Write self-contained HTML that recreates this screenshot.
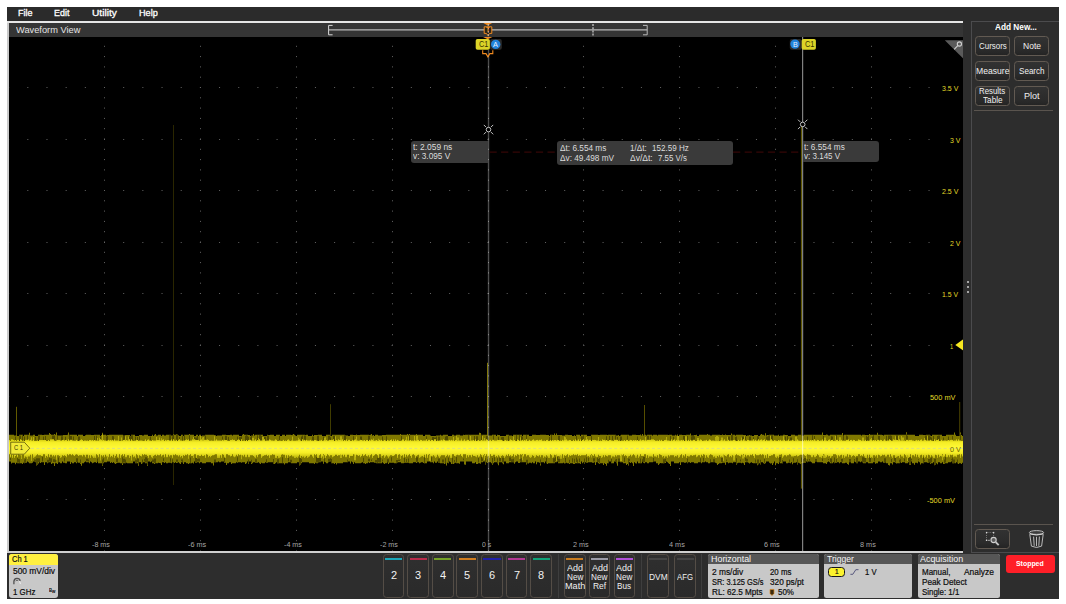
<!DOCTYPE html>
<html><head><meta charset="utf-8"><title>Oscilloscope</title>
<style>
html,body{margin:0;padding:0;background:#fff;}
body{width:1066px;height:604px;position:relative;overflow:hidden;font-family:"Liberation Sans",sans-serif;}
#a div,#a span,#a svg{position:absolute;display:block;}
#a span{white-space:nowrap;transform-origin:0 50%;}
</style></head>
<body><div id="a">
<div style="left:7.00px;top:7.00px;width:1052.00px;height:592.00px;background:#2d2d2d;"></div>
<div style="left:7.00px;top:7.00px;width:1052.00px;height:14.00px;background:#2b2b2b;"></div>
<span style="left:17.80px;top:7.10px;font-size:9.2px;line-height:13px;color:#fff;transform:scaleX(0.9781);-webkit-text-stroke:0.3px #fff;">File</span>
<span style="left:54.40px;top:7.10px;font-size:9.2px;line-height:13px;color:#fff;transform:scaleX(0.9714);-webkit-text-stroke:0.3px #fff;">Edit</span>
<span style="left:91.90px;top:7.10px;font-size:9.2px;line-height:13px;color:#fff;transform:scaleX(1.1028);-webkit-text-stroke:0.3px #fff;">Utility</span>
<span style="left:138.80px;top:7.10px;font-size:9.2px;line-height:13px;color:#fff;transform:scaleX(0.9936);-webkit-text-stroke:0.3px #fff;">Help</span>
<div style="left:7.00px;top:21.00px;width:956.20px;height:531.80px;background:#cacaca;"></div>
<div style="left:7.00px;top:21.00px;width:956.20px;height:2.00px;background:#e6e6e6;"></div>
<div style="left:9.00px;top:36.60px;width:954.20px;height:514.40px;background:#000;"></div>
<svg style="left:9px;top:36px;width:955px;height:516px" viewBox="9 36 955 516"><g stroke="#646464" stroke-width="1" fill="none"><line x1="8.50" y1="35.50" x2="8.50" y2="551" stroke-dasharray="1 9.300"/><line x1="104.50" y1="35.50" x2="104.50" y2="551" stroke-dasharray="1 9.300"/><line x1="200.50" y1="35.50" x2="200.50" y2="551" stroke-dasharray="1 9.300"/><line x1="296.50" y1="35.50" x2="296.50" y2="551" stroke-dasharray="1 9.300"/><line x1="392.50" y1="35.50" x2="392.50" y2="551" stroke-dasharray="1 9.300"/><line x1="488.50" y1="35.50" x2="488.50" y2="551" stroke-dasharray="1 9.300"/><line x1="583.50" y1="35.50" x2="583.50" y2="551" stroke-dasharray="1 9.300"/><line x1="679.50" y1="35.50" x2="679.50" y2="551" stroke-dasharray="1 9.300"/><line x1="775.50" y1="35.50" x2="775.50" y2="551" stroke-dasharray="1 9.300"/><line x1="871.50" y1="35.50" x2="871.50" y2="551" stroke-dasharray="1 9.300"/><line x1="967.50" y1="35.50" x2="967.50" y2="551" stroke-dasharray="1 9.300"/><line x1="8.14" y1="87.50" x2="967.2" y2="87.50" stroke-dasharray="1 18.175"/><line x1="8.14" y1="139.50" x2="967.2" y2="139.50" stroke-dasharray="1 18.175"/><line x1="8.14" y1="190.50" x2="967.2" y2="190.50" stroke-dasharray="1 18.175"/><line x1="8.14" y1="242.50" x2="967.2" y2="242.50" stroke-dasharray="1 18.175"/><line x1="8.14" y1="293.50" x2="967.2" y2="293.50" stroke-dasharray="1 18.175"/><line x1="8.14" y1="345.50" x2="967.2" y2="345.50" stroke-dasharray="1 18.175"/><line x1="8.14" y1="396.50" x2="967.2" y2="396.50" stroke-dasharray="1 18.175"/><line x1="8.14" y1="448.50" x2="967.2" y2="448.50" stroke-dasharray="1 18.175"/><line x1="8.14" y1="499.50" x2="967.2" y2="499.50" stroke-dasharray="1 18.175"/></g><rect x="16.0" y="406.8" width="1" height="29.2" fill="#625a00"/><rect x="173.0" y="125.0" width="1" height="360.0" fill="#2a2600"/><rect x="330.0" y="404.2" width="1" height="31.8" fill="#403c00"/><rect x="487.0" y="362.8" width="1" height="73.2" fill="#7c7200"/><rect x="644.0" y="405.0" width="1" height="31.0" fill="#564e00"/><rect x="800.9" y="124.6" width="1.1" height="364.0" fill="#5e5600"/><rect x="959.2" y="402.0" width="1" height="34.0" fill="#4a4200"/><path d="M9 434.7V434.7h1V434.7h1V434.7h1V434.7h1V434.8h1V435.5h1V435.5h1V435.5h1V435.9h1V435.9h1V434.7h1V434.7h1V434.7h1V434.7h1V435.9h1V434.7h1V434.7h1V434.7h1V434.7h1V434.7h1V432.7h1V435.5h1V435.5h1V435.5h1V434.7h1V434.7h1V435.9h1V435.9h1V435.9h1V434.7h1V434.7h1V434.7h1V434.7h1V435.1h1V435.1h1V434.7h1V434.7h1V434.7h1V434.7h1V434.7h1V433.0h1V434.0h1V434.7h1V434.7h1V434.7h1V434.0h1V434.7h1V432.5h1V435.5h1V435.5h1V435.5h1V435.5h1V435.5h1V435.5h1V435.1h1V435.1h1V435.1h1V435.1h1V434.7h1V432.6h1V434.7h1V434.7h1V434.7h1V434.7h1V434.7h1V434.7h1V434.7h1V434.7h1V435.9h1V434.7h1V434.7h1V434.7h1V434.7h1V434.7h1V435.9h1V435.9h1V435.2h1V434.7h1V434.7h1V434.7h1V434.7h1V434.7h1V435.1h1V435.1h1V435.1h1V434.7h1V434.7h1V434.7h1V434.7h1V434.7h1V434.7h1V435.9h1V435.1h1V432.7h1V434.7h1V434.7h1V434.7h1V435.5h1V435.1h1V435.1h1V434.7h1V434.7h1V434.7h1V434.7h1V434.7h1V434.7h1V434.7h1V434.7h1V434.7h1V434.7h1V434.7h1V434.7h1V434.7h1V434.7h1V435.5h1V435.5h1V435.1h1V435.1h1V435.1h1V435.1h1V435.1h1V435.9h1V434.7h1V434.7h1V434.7h1V434.7h1V435.9h1V435.9h1V435.9h1V435.9h1V435.1h1V435.1h1V435.1h1V435.5h1V435.5h1V434.7h1V434.7h1V434.7h1V434.7h1V435.9h1V435.9h1V435.9h1V435.9h1V434.7h1V435.9h1V434.7h1V434.0h1V435.5h1V435.5h1V434.7h1V434.7h1V434.7h1V435.9h1V434.7h1V434.7h1V435.5h1V435.5h1V434.7h1V434.7h1V434.7h1V434.7h1V434.7h1V435.5h1V435.5h1V434.0h1V434.7h1V434.7h1V434.0h1V435.9h1V435.2h1V435.9h1V435.9h1V434.7h1V434.7h1V435.9h1V434.7h1V434.7h1V434.7h1V434.7h1V434.7h1V434.0h1V434.7h1V434.7h1V434.7h1V434.7h1V435.9h1V435.9h1V434.7h1V434.7h1V435.9h1V434.7h1V434.7h1V435.9h1V435.5h1V435.5h1V435.5h1V434.7h1V434.7h1V434.7h1V434.7h1V434.7h1V434.7h1V434.7h1V434.7h1V434.7h1V435.1h1V435.2h1V435.9h1V435.5h1V435.5h1V435.5h1V435.5h1V435.5h1V434.7h1V434.7h1V434.7h1V434.7h1V435.1h1V435.1h1V435.1h1V435.1h1V434.7h1V434.7h1V435.5h1V434.7h1V434.7h1V434.7h1V434.7h1V434.7h1V434.7h1V435.9h1V435.9h1V435.9h1V434.7h1V434.0h1V434.7h1V434.7h1V434.7h1V434.7h1V435.1h1V435.1h1V435.9h1V435.5h1V435.5h1V433.9h1V435.5h1V434.7h1V434.7h1V434.7h1V434.7h1V434.7h1V434.7h1V434.7h1V434.7h1V435.9h1V435.9h1V435.9h1V435.9h1V434.7h1V435.1h1V435.1h1V434.7h1V434.7h1V434.7h1V434.7h1V435.9h1V435.9h1V434.7h1V434.7h1V434.7h1V434.7h1V435.9h1V435.9h1V434.7h1V434.7h1V434.7h1V435.9h1V434.7h1V434.7h1V434.7h1V434.7h1V434.7h1V435.1h1V434.7h1V434.0h1V434.7h1V435.5h1V435.9h1V434.7h1V434.7h1V434.7h1V434.7h1V434.7h1V434.7h1V434.7h1V434.7h1V435.1h1V434.7h1V434.7h1V435.9h1V435.9h1V435.9h1V435.9h1V434.7h1V435.9h1V435.1h1V435.1h1V435.1h1V435.1h1V434.7h1V434.7h1V434.7h1V434.7h1V435.9h1V435.9h1V435.9h1V435.9h1V434.7h1V434.7h1V434.7h1V434.7h1V435.9h1V435.9h1V434.7h1V434.7h1V434.7h1V434.7h1V434.7h1V434.7h1V434.7h1V434.7h1V434.7h1V434.7h1V434.7h1V434.7h1V434.7h1V435.5h1V435.5h1V435.5h1V435.9h1V435.9h1V434.7h1V434.7h1V434.7h1V435.1h1V435.1h1V435.1h1V434.4h1V435.1h1V435.1h1V435.1h1V434.7h1V434.7h1V434.7h1V434.7h1V434.7h1V434.7h1V434.7h1V434.7h1V434.7h1V435.1h1V434.7h1V434.0h1V435.5h1V435.1h1V435.9h1V434.7h1V434.7h1V434.7h1V435.5h1V435.5h1V435.5h1V435.5h1V435.1h1V435.1h1V435.1h1V435.1h1V434.7h1V434.7h1V434.7h1V434.7h1V434.7h1V434.7h1V434.7h1V434.7h1V434.7h1V434.7h1V434.7h1V434.7h1V434.7h1V434.7h1V434.0h1V434.7h1V434.7h1V434.7h1V434.7h1V434.7h1V434.7h1V434.0h1V434.7h1V434.0h1V434.7h1V434.7h1V434.7h1V434.7h1V434.7h1V434.7h1V434.0h1V434.7h1V434.7h1V434.7h1V434.7h1V434.7h1V434.7h1V435.9h1V435.9h1V434.7h1V434.7h1V434.7h1V434.7h1V434.7h1V435.5h1V435.9h1V435.9h1V435.9h1V435.9h1V435.9h1V435.5h1V435.5h1V435.5h1V435.5h1V434.7h1V435.5h1V435.5h1V434.7h1V434.7h1V434.7h1V434.7h1V434.7h1V435.9h1V435.9h1V435.9h1V435.9h1V434.7h1V434.7h1V435.5h1V435.5h1V434.7h1V434.7h1V434.7h1V434.7h1V435.5h1V435.5h1V435.5h1V434.7h1V435.1h1V434.7h1V434.7h1V434.7h1V434.7h1V434.7h1V434.7h1V434.7h1V434.7h1V434.7h1V434.7h1V434.7h1V434.7h1V434.7h1V434.7h1V432.7h1V433.1h1V434.7h1V434.7h1V434.8h1V434.7h1V434.7h1V434.7h1V434.7h1V435.5h1V435.5h1V435.5h1V435.5h1V434.7h1V434.7h1V434.7h1V434.7h1V435.9h1V434.7h1V435.1h1V435.1h1V435.9h1V435.9h1V435.9h1V435.9h1V435.9h1V435.9h1V434.7h1V434.7h1V434.7h1V435.5h1V435.5h1V435.5h1V435.9h1V434.7h1V434.7h1V434.7h1V434.7h1V434.7h1V434.7h1V434.7h1V434.7h1V434.7h1V435.9h1V434.7h1V434.7h1V434.7h1V434.7h1V434.7h1V434.7h1V435.9h1V435.9h1V435.9h1V434.7h1V434.7h1V434.7h1V434.7h1V435.1h1V435.1h1V435.1h1V435.1h1V434.7h1V434.7h1V434.7h1V434.7h1V434.7h1V434.7h1V435.1h1V435.1h1V435.1h1V435.9h1V434.7h1V434.7h1V434.7h1V435.1h1V433.5h1V435.1h1V433.6h1V435.1h1V435.1h1V435.1h1V435.1h1V435.1h1V435.5h1V435.5h1V435.5h1V434.7h1V434.7h1V434.7h1V435.1h1V435.1h1V435.1h1V435.1h1V435.9h1V435.9h1V435.2h1V435.9h1V434.7h1V434.7h1V434.7h1V434.7h1V435.9h1V434.7h1V434.7h1V434.7h1V434.7h1V434.7h1V434.7h1V435.9h1V435.9h1V435.9h1V435.9h1V434.7h1V434.7h1V434.7h1V434.7h1V434.7h1V434.7h1V434.7h1V435.1h1V435.1h1V434.7h1V434.7h1V434.7h1V434.7h1V434.7h1V434.7h1V434.7h1V435.1h1V434.7h1V434.7h1V434.7h1V434.7h1V434.7h1V434.7h1V434.7h1V434.7h1V435.5h1V435.5h1V435.1h1V435.9h1V435.5h1V434.7h1V434.7h1V434.7h1V434.7h1V434.7h1V434.7h1V434.7h1V434.8h1V435.5h1V435.5h1V435.5h1V434.7h1V434.7h1V434.7h1V434.7h1V435.1h1V435.1h1V435.1h1V435.1h1V434.4h1V435.5h1V434.0h1V435.5h1V434.7h1V434.7h1V435.5h1V434.7h1V434.7h1V434.7h1V434.7h1V434.7h1V435.5h1V434.7h1V434.7h1V434.7h1V434.7h1V435.5h1V434.7h1V434.7h1V434.7h1V434.7h1V434.7h1V434.7h1V434.7h1V434.7h1V434.7h1V434.7h1V435.1h1V434.7h1V434.7h1V434.7h1V435.5h1V435.5h1V435.5h1V434.7h1V435.5h1V434.4h1V435.9h1V434.7h1V434.7h1V434.7h1V435.1h1V435.1h1V435.1h1V435.1h1V434.7h1V434.7h1V434.7h1V434.7h1V433.5h1V435.5h1V435.5h1V435.5h1V435.1h1V435.1h1V434.7h1V435.9h1V435.9h1V434.7h1V434.7h1V434.7h1V434.7h1V434.7h1V434.7h1V434.7h1V434.7h1V434.0h1V434.7h1V434.7h1V435.5h1V435.5h1V434.7h1V434.7h1V434.7h1V434.7h1V434.7h1V434.7h1V434.7h1V434.7h1V435.1h1V435.1h1V434.4h1V435.1h1V435.1h1V434.4h1V435.1h1V435.1h1V435.1h1V435.1h1V435.1h1V433.6h1V434.7h1V434.7h1V434.7h1V435.5h1V434.7h1V434.7h1V434.7h1V434.7h1V434.7h1V434.7h1V434.7h1V435.1h1V435.1h1V435.1h1V435.9h1V435.5h1V435.5h1V435.1h1V435.5h1V435.5h1V435.9h1V435.9h1V435.1h1V435.1h1V435.1h1V435.1h1V435.9h1V435.9h1V434.7h1V434.0h1V434.7h1V434.7h1V435.5h1V433.2h1V435.5h1V435.1h1V435.1h1V434.7h1V434.7h1V434.7h1V434.7h1V434.7h1V435.5h1V435.5h1V435.5h1V435.5h1V434.7h1V435.9h1V435.5h1V435.5h1V435.5h1V434.7h1V434.7h1V435.1h1V435.1h1V435.1h1V435.9h1V435.9h1V435.9h1V434.7h1V434.7h1V434.7h1V434.7h1V435.5h1V435.5h1V435.5h1V434.7h1V434.7h1V434.7h1V435.5h1V435.5h1V435.5h1V434.7h1V434.7h1V434.7h1V434.7h1V434.7h1V434.7h1V434.7h1V434.7h1V434.7h1V434.7h1V434.7h1V434.7h1V434.7h1V434.7h1V434.7h1V434.7h1V434.7h1V434.7h1V432.4h1V435.1h1V435.1h1V435.1h1V434.4h1V434.7h1V435.5h1V435.5h1V434.7h1V434.7h1V434.7h1V434.7h1V434.7h1V434.7h1V434.7h1V434.7h1V434.7h1V434.7h1V434.7h1V434.7h1V432.9h1V435.5h1V434.7h1V434.7h1V434.7h1V434.7h1V434.7h1V434.7h1V434.7h1V434.7h1V434.7h1V434.7h1V434.7h1V434.7h1V434.7h1V434.7h1V434.7h1V434.7h1V434.7h1V435.5h1V434.7h1V434.7h1V434.7h1V435.1h1V435.1h1V435.1h1V435.1h1V434.0h1V434.7h1V434.7h1V434.7h1V434.7h1V434.7h1V434.7h1V434.7h1V432.8h1V434.7h1V434.7h1V434.7h1V434.7h1V435.1h1V435.5h1V434.7h1V434.7h1V434.7h1V434.7h1V434.7h1V434.7h1V434.7h1V434.7h1V434.7h1V434.7h1V434.7h1V434.7h1V434.7h1V434.7h1V434.7h1V434.7h1V434.7h1V434.7h1V434.7h1V434.7h1V434.7h1V434.7h1V432.2h1V434.7h1V434.7h1V434.7h1V434.7h1V434.7h1V434.7h1V434.7h1V434.7h1V435.9h1V435.9h1V435.9h1V435.9h1V434.7h1V434.7h1V434.7h1V434.7h1V435.1h1V435.1h1V435.1h1V434.7h1V434.7h1V434.7h1V434.7h1V435.5h1V435.9h1V434.7h1V434.7h1V434.7h1V434.7h1V434.7h1V434.7h1V434.7h1V434.7h1V434.7h1V434.7h1V435.9h1V435.9h1V435.9h1V435.9h1V434.7h1V434.7h1V434.7h1V434.7h1V434.7h1V434.7h1V434.7h1V434.7h1V432.6h1V434.7h1V435.9h1V435.9h1V435.9h1V435.9h1V432.5h1V435.1h1V435.9h1V435.9h1V435.9h1V462.8h-1V463.6h-1V462.8h-1V464.1h-1V463.3h-1V463.3h-1V464.1h-1V463.3h-1V462.3h-1V463.3h-1V462.3h-1V463.3h-1V463.3h-1V461.5h-1V462.3h-1V462.3h-1V462.3h-1V463.3h-1V463.3h-1V463.3h-1V464.1h-1V464.1h-1V462.3h-1V463.3h-1V463.3h-1V462.3h-1V462.3h-1V464.3h-1V463.3h-1V463.3h-1V465.2h-1V462.3h-1V463.3h-1V463.3h-1V464.1h-1V462.3h-1V462.8h-1V462.8h-1V462.3h-1V462.3h-1V462.3h-1V463.3h-1V463.3h-1V463.3h-1V464.4h-1V462.3h-1V461.5h-1V463.3h-1V462.8h-1V462.8h-1V464.8h-1V463.3h-1V463.3h-1V461.5h-1V465.1h-1V464.7h-1V462.3h-1V463.3h-1V463.3h-1V463.3h-1V462.3h-1V462.3h-1V462.3h-1V463.1h-1V462.3h-1V463.3h-1V463.3h-1V463.3h-1V463.6h-1V462.8h-1V462.3h-1V462.3h-1V464.5h-1V463.3h-1V463.3h-1V465.4h-1V465.0h-1V463.3h-1V463.3h-1V462.3h-1V462.8h-1V462.8h-1V461.5h-1V462.3h-1V462.3h-1V461.5h-1V461.5h-1V463.3h-1V463.3h-1V463.7h-1V462.3h-1V462.3h-1V463.3h-1V463.3h-1V463.3h-1V463.3h-1V463.3h-1V462.3h-1V462.3h-1V463.3h-1V463.3h-1V463.3h-1V462.3h-1V461.5h-1V462.3h-1V461.5h-1V461.5h-1V463.3h-1V463.3h-1V462.3h-1V461.5h-1V463.3h-1V463.3h-1V463.3h-1V462.3h-1V462.3h-1V464.7h-1V464.1h-1V462.8h-1V462.8h-1V463.3h-1V463.3h-1V463.3h-1V462.3h-1V462.3h-1V463.3h-1V462.3h-1V462.3h-1V462.8h-1V462.8h-1V463.3h-1V462.3h-1V463.3h-1V463.3h-1V463.3h-1V462.3h-1V461.5h-1V462.3h-1V464.0h-1V463.3h-1V463.3h-1V463.3h-1V462.3h-1V462.3h-1V462.3h-1V462.3h-1V462.3h-1V462.3h-1V461.5h-1V461.5h-1V463.3h-1V463.3h-1V463.3h-1V462.3h-1V461.5h-1V461.5h-1V461.5h-1V462.3h-1V461.5h-1V462.8h-1V462.8h-1V462.8h-1V463.3h-1V463.3h-1V464.1h-1V463.3h-1V462.8h-1V464.5h-1V462.3h-1V462.8h-1V462.8h-1V462.8h-1V464.2h-1V462.3h-1V463.3h-1V462.8h-1V462.8h-1V463.3h-1V463.3h-1V461.5h-1V461.5h-1V461.5h-1V463.3h-1V463.3h-1V463.3h-1V462.3h-1V464.1h-1V463.3h-1V463.3h-1V465.2h-1V461.5h-1V463.3h-1V465.1h-1V463.3h-1V463.6h-1V462.8h-1V461.5h-1V461.5h-1V461.5h-1V463.3h-1V464.1h-1V463.3h-1V462.3h-1V462.3h-1V464.5h-1V463.3h-1V463.3h-1V465.3h-1V463.3h-1V463.3h-1V463.3h-1V463.3h-1V463.1h-1V462.3h-1V462.8h-1V463.6h-1V462.8h-1V462.3h-1V462.3h-1V462.3h-1V464.9h-1V463.3h-1V462.8h-1V463.3h-1V462.8h-1V462.8h-1V462.8h-1V463.3h-1V464.8h-1V462.3h-1V462.3h-1V462.3h-1V463.3h-1V462.8h-1V462.8h-1V462.8h-1V463.3h-1V462.3h-1V462.3h-1V464.7h-1V462.8h-1V462.8h-1V462.8h-1V463.3h-1V463.3h-1V463.3h-1V464.1h-1V465.1h-1V463.3h-1V462.8h-1V462.3h-1V462.3h-1V462.3h-1V462.3h-1V462.3h-1V463.3h-1V463.3h-1V462.3h-1V462.3h-1V461.5h-1V462.3h-1V462.3h-1V462.3h-1V463.3h-1V462.3h-1V462.3h-1V462.3h-1V463.3h-1V463.3h-1V463.3h-1V463.3h-1V462.3h-1V462.3h-1V462.3h-1V463.1h-1V462.3h-1V462.3h-1V463.3h-1V462.3h-1V462.8h-1V462.8h-1V462.3h-1V462.3h-1V462.3h-1V465.1h-1V462.3h-1V463.3h-1V463.3h-1V463.3h-1V463.3h-1V463.3h-1V461.5h-1V461.5h-1V461.5h-1V466.0h-1V464.1h-1V463.3h-1V462.3h-1V461.5h-1V463.1h-1V462.3h-1V463.3h-1V463.3h-1V463.3h-1V463.1h-1V463.7h-1V465.1h-1V463.3h-1V463.3h-1V461.5h-1V461.5h-1V461.5h-1V462.3h-1V462.3h-1V462.3h-1V462.3h-1V463.3h-1V463.3h-1V462.3h-1V462.3h-1V463.3h-1V462.8h-1V461.5h-1V463.3h-1V463.3h-1V463.3h-1V463.3h-1V461.5h-1V463.6h-1V463.3h-1V462.3h-1V466.0h-1V463.3h-1V462.3h-1V463.1h-1V462.3h-1V465.5h-1V464.1h-1V465.0h-1V463.3h-1V463.3h-1V463.3h-1V462.3h-1V462.3h-1V462.3h-1V461.5h-1V461.5h-1V465.8h-1V463.3h-1V461.5h-1V461.5h-1V463.3h-1V463.3h-1V463.3h-1V461.5h-1V461.5h-1V463.3h-1V463.3h-1V465.7h-1V464.1h-1V463.3h-1V465.0h-1V463.3h-1V463.3h-1V463.3h-1V464.1h-1V463.3h-1V462.3h-1V462.3h-1V464.9h-1V462.3h-1V462.8h-1V462.8h-1V462.3h-1V462.3h-1V462.3h-1V462.3h-1V462.8h-1V462.8h-1V462.3h-1V464.1h-1V462.3h-1V463.3h-1V461.5h-1V464.0h-1V463.3h-1V463.3h-1V463.3h-1V463.3h-1V463.3h-1V464.1h-1V464.1h-1V463.3h-1V463.3h-1V463.3h-1V464.1h-1V463.3h-1V463.3h-1V462.8h-1V463.3h-1V463.6h-1V462.8h-1V463.3h-1V463.3h-1V463.3h-1V463.3h-1V463.3h-1V461.5h-1V462.3h-1V462.3h-1V463.3h-1V463.3h-1V463.3h-1V463.3h-1V463.3h-1V463.3h-1V463.3h-1V464.1h-1V463.3h-1V461.5h-1V463.3h-1V462.3h-1V462.3h-1V462.3h-1V465.5h-1V462.8h-1V462.3h-1V462.3h-1V464.3h-1V461.5h-1V463.3h-1V463.3h-1V462.3h-1V463.3h-1V462.8h-1V462.8h-1V463.6h-1V463.3h-1V464.6h-1V462.3h-1V462.3h-1V462.3h-1V462.3h-1V462.3h-1V462.3h-1V463.1h-1V463.1h-1V461.5h-1V461.5h-1V462.3h-1V463.8h-1V462.3h-1V462.3h-1V462.3h-1V462.3h-1V462.3h-1V463.3h-1V463.3h-1V463.3h-1V461.5h-1V461.5h-1V464.2h-1V463.3h-1V462.3h-1V462.3h-1V462.3h-1V465.2h-1V463.3h-1V462.3h-1V462.3h-1V462.3h-1V463.3h-1V464.8h-1V463.3h-1V462.3h-1V462.3h-1V462.3h-1V463.1h-1V462.3h-1V464.6h-1V461.5h-1V461.5h-1V462.3h-1V462.3h-1V463.7h-1V463.3h-1V463.3h-1V464.1h-1V463.9h-1V462.3h-1V463.3h-1V463.3h-1V463.3h-1V461.5h-1V461.5h-1V461.5h-1V461.5h-1V461.5h-1V461.5h-1V464.7h-1V464.5h-1V461.5h-1V461.5h-1V461.5h-1V461.5h-1V463.7h-1V463.3h-1V463.3h-1V463.3h-1V462.8h-1V463.3h-1V464.1h-1V464.1h-1V464.1h-1V462.3h-1V461.5h-1V463.3h-1V462.8h-1V465.5h-1V463.3h-1V464.1h-1V463.3h-1V463.3h-1V463.3h-1V463.3h-1V462.3h-1V463.1h-1V461.5h-1V462.8h-1V462.8h-1V461.5h-1V463.3h-1V462.3h-1V462.3h-1V462.3h-1V461.5h-1V461.5h-1V461.5h-1V463.3h-1V463.3h-1V463.3h-1V463.1h-1V462.3h-1V462.3h-1V462.8h-1V463.3h-1V462.3h-1V462.3h-1V463.1h-1V462.3h-1V462.3h-1V462.3h-1V463.3h-1V463.3h-1V463.3h-1V463.3h-1V462.8h-1V462.8h-1V462.8h-1V462.8h-1V462.8h-1V463.3h-1V463.3h-1V463.3h-1V462.3h-1V462.3h-1V462.3h-1V462.3h-1V463.3h-1V463.3h-1V463.3h-1V462.8h-1V462.8h-1V462.8h-1V462.8h-1V462.8h-1V464.1h-1V462.3h-1V463.3h-1V463.3h-1V464.1h-1V463.3h-1V462.3h-1V463.3h-1V463.3h-1V463.3h-1V463.3h-1V463.3h-1V463.3h-1V462.8h-1V462.8h-1V462.3h-1V462.3h-1V462.3h-1V462.3h-1V463.1h-1V462.3h-1V463.3h-1V463.3h-1V464.1h-1V463.3h-1V463.3h-1V462.3h-1V462.8h-1V463.3h-1V463.3h-1V463.3h-1V463.3h-1V463.3h-1V463.3h-1V462.3h-1V463.9h-1V462.3h-1V461.5h-1V463.5h-1V461.5h-1V461.5h-1V462.3h-1V462.3h-1V462.3h-1V462.3h-1V462.3h-1V463.3h-1V463.3h-1V463.3h-1V463.3h-1V463.3h-1V463.3h-1V464.5h-1V463.1h-1V464.1h-1V463.3h-1V463.3h-1V463.3h-1V461.5h-1V461.5h-1V462.3h-1V463.3h-1V463.3h-1V462.3h-1V461.5h-1V463.8h-1V461.5h-1V461.5h-1V462.3h-1V462.3h-1V462.3h-1V463.3h-1V463.3h-1V462.8h-1V464.1h-1V463.3h-1V463.3h-1V463.3h-1V463.3h-1V463.3h-1V462.3h-1V462.3h-1V462.3h-1V462.3h-1V462.3h-1V462.3h-1V462.3h-1V463.3h-1V463.3h-1V465.6h-1V462.3h-1V462.3h-1V463.3h-1V463.3h-1V463.3h-1V463.3h-1V463.3h-1V463.3h-1V462.3h-1V462.3h-1V462.3h-1V463.3h-1V463.3h-1V463.3h-1V464.6h-1V463.3h-1V463.3h-1V463.3h-1V463.3h-1V463.3h-1V463.3h-1V463.3h-1V462.3h-1V463.3h-1V464.1h-1V464.1h-1V462.3h-1V462.3h-1V462.3h-1V462.3h-1V462.3h-1V462.8h-1V463.1h-1V462.3h-1V463.3h-1V463.3h-1V463.3h-1V462.8h-1V464.1h-1V463.3h-1V462.3h-1V462.8h-1V462.8h-1V462.8h-1V462.3h-1V462.3h-1V463.3h-1V464.1h-1V461.5h-1V461.5h-1V463.7h-1V461.5h-1V463.3h-1V464.1h-1V462.3h-1V462.3h-1V462.3h-1V462.8h-1V462.3h-1V462.3h-1V462.3h-1V462.8h-1V462.3h-1V463.3h-1V463.3h-1V463.3h-1V463.3h-1V464.1h-1V462.3h-1V462.3h-1V463.3h-1V463.3h-1V464.9h-1V462.8h-1V462.8h-1V461.5h-1V461.5h-1V461.5h-1V462.3h-1V462.3h-1V461.5h-1V462.3h-1V462.3h-1V462.3h-1V462.3h-1V465.4h-1V463.3h-1V463.3h-1V462.3h-1V462.3h-1V462.3h-1V462.3h-1V462.3h-1V463.3h-1V463.3h-1V463.3h-1V463.3h-1V462.3h-1V462.3h-1V463.3h-1V462.3h-1V462.3h-1V462.8h-1V462.8h-1V461.5h-1V463.6h-1V462.8h-1V463.3h-1V463.3h-1V463.3h-1V464.1h-1V463.3h-1V463.3h-1V462.3h-1V462.3h-1V464.1h-1V462.3h-1V462.3h-1V464.1h-1V463.3h-1V462.3h-1V462.8h-1V463.1h-1V462.3h-1V463.1h-1V462.3h-1V462.3h-1V463.3h-1V462.8h-1V462.8h-1V462.8h-1V463.3h-1V463.3h-1V462.3h-1V463.1h-1V462.3h-1V462.3h-1V465.1h-1V463.3h-1V463.1h-1V462.8h-1V463.3h-1V463.3h-1V463.3h-1V464.1h-1V463.3h-1V463.3h-1V461.5h-1V462.3h-1V461.5h-1V461.5h-1V466.0h-1V463.3h-1V463.3h-1V462.3h-1V462.3h-1V463.3h-1V464.1h-1V462.3h-1V462.3h-1V465.8h-1V463.3h-1V463.3h-1V463.3h-1V461.5h-1V461.5h-1V463.3h-1V463.3h-1V463.3h-1V463.3h-1V463.3h-1V463.3h-1V462.8h-1V463.3h-1V463.3h-1V463.3h-1V465.1h-1V463.3h-1V463.3h-1V462.8h-1V462.8h-1V462.8h-1V463.3h-1V464.1h-1V463.3h-1V462.3h-1V463.1h-1V462.3h-1V463.1h-1V461.5h-1V461.5h-1V461.5h-1V462.3h-1V462.3h-1V462.3h-1V463.3h-1V465.8h-1V463.3h-1V463.3h-1V463.3h-1V463.3h-1V461.5h-1V463.1h-1V462.3h-1V462.3h-1V462.8h-1V463.3h-1V462.3h-1V461.5h-1V463.2h-1V462.3h-1V462.3h-1V462.3h-1V461.5h-1V462.3h-1V463.3h-1V463.3h-1V465.7h-1V464.1h-1V462.8h-1V462.8h-1V462.3h-1V463.3h-1V462.3h-1V462.3h-1V463.3h-1V463.3h-1V462.3h-1V464.1h-1V461.5h-1V461.5h-1V461.5h-1V463.3h-1V463.3h-1V462.8h-1V462.8h-1V461.5h-1V463.3h-1V463.3h-1V462.3h-1V462.3h-1V464.1h-1V463.3h-1V463.3h-1V466.0h-1V463.3h-1V463.3h-1V464.1h-1V462.3h-1V462.3h-1V462.3h-1V463.3h-1V462.3h-1V462.3h-1V465.0h-1V462.3h-1V462.3h-1V462.3h-1V463.1h-1V462.3h-1V463.4h-1V462.3h-1V465.6h-1V462.3h-1V461.5h-1V461.5h-1V462.8h-1V463.3h-1V463.3h-1V463.3h-1V462.3h-1V461.5h-1V462.8h-1V462.8h-1V463.3h-1V462.8h-1V464.1h-1V463.3h-1V463.3h-1V463.3h-1V463.3h-1V463.3h-1V462.8h-1V464.2h-1V462.8h-1V462.8h-1V462.8h-1V463.6h-1V461.5h-1V461.5h-1Z" fill="#807800"/><path d="M10 457.9h1V460.2h-1ZM15 436.4h1V441.6h-1ZM17 458.0h1V462.7h-1ZM18 459.1h1V462.4h-1ZM19 435.2h1V441.6h-1ZM19 459.3h1V463.0h-1ZM20 435.6h1V441.6h-1ZM22 435.2h1V441.6h-1ZM24 436.5h1V441.6h-1ZM24 459.4h1V463.1h-1ZM25 458.8h1V462.3h-1ZM27 435.4h1V441.6h-1ZM34 459.3h1V461.3h-1ZM35 436.9h1V441.6h-1ZM35 459.6h1V461.8h-1ZM36 458.3h2V465.0h-2ZM38 435.6h2V441.6h-2ZM38 458.2h2V462.0h-2ZM42 457.0h1V461.4h-1ZM43 436.5h1V441.6h-1ZM45 436.1h1V441.6h-1ZM47 459.8h2V462.5h-2ZM49 457.5h1V461.4h-1ZM50 458.3h2V461.9h-2ZM52 435.6h1V441.6h-1ZM53 435.5h2V441.6h-2ZM53 459.2h2V462.0h-2ZM55 459.7h1V462.6h-1ZM57 436.1h1V441.6h-1ZM58 457.4h1V462.2h-1ZM61 436.3h2V441.6h-2ZM64 457.8h1V461.4h-1ZM65 436.8h1V441.6h-1ZM69 435.1h1V441.6h-1ZM70 435.9h2V441.6h-2ZM73 436.5h1V441.6h-1ZM76 458.3h2V462.1h-2ZM78 436.5h1V441.6h-1ZM79 436.5h1V441.6h-1ZM80 459.6h1V463.2h-1ZM86 458.8h2V461.3h-2ZM88 459.5h1V461.4h-1ZM94 435.9h1V441.6h-1ZM96 435.8h1V441.6h-1ZM97 458.6h1V461.2h-1ZM100 436.7h1V441.6h-1ZM102 459.5h1V465.0h-1ZM103 458.3h1V462.6h-1ZM106 436.5h1V441.6h-1ZM107 435.7h1V441.6h-1ZM112 436.1h1V441.6h-1ZM113 436.3h1V441.6h-1ZM116 458.6h2V461.9h-2ZM122 457.3h1V463.6h-1ZM123 436.0h2V441.6h-2ZM123 458.8h2V462.4h-2ZM125 459.5h1V463.1h-1ZM129 436.3h2V441.6h-2ZM131 435.2h1V441.6h-1ZM132 435.2h1V441.6h-1ZM135 436.6h1V441.6h-1ZM135 459.6h1V462.8h-1ZM136 459.8h1V462.9h-1ZM137 437.0h1V441.6h-1ZM137 458.3h1V462.1h-1ZM138 458.7h1V464.5h-1ZM139 436.2h1V441.6h-1ZM142 459.6h1V463.0h-1ZM144 458.9h1V461.6h-1ZM145 457.2h2V462.6h-2ZM147 458.4h1V465.4h-1ZM150 436.4h1V441.6h-1ZM152 459.6h2V462.3h-2ZM154 458.5h2V463.0h-2ZM163 458.3h1V461.1h-1ZM169 435.1h1V441.6h-1ZM170 435.1h1V441.6h-1ZM170 458.3h1V461.8h-1ZM172 436.3h1V441.6h-1ZM172 459.2h1V462.1h-1ZM173 434.4h1V441.6h-1ZM176 434.3h2V441.6h-2ZM176 459.4h2V461.8h-2ZM179 437.1h1V441.6h-1ZM181 459.6h1V461.3h-1ZM182 435.8h1V441.6h-1ZM182 459.4h1V462.2h-1ZM184 435.2h1V441.6h-1ZM189 435.3h1V441.6h-1ZM190 457.4h1V463.1h-1ZM194 436.8h1V441.6h-1ZM195 437.4h2V441.6h-2ZM195 457.7h2V462.4h-2ZM197 436.0h1V441.6h-1ZM197 459.1h1V461.4h-1ZM198 458.5h2V461.5h-2ZM205 435.5h1V441.6h-1ZM214 459.4h1V462.0h-1ZM215 459.6h1V462.3h-1ZM222 436.5h1V441.6h-1ZM224 458.0h1V462.1h-1ZM225 435.7h2V441.6h-2ZM228 436.9h1V441.6h-1ZM237 436.5h1V441.6h-1ZM237 457.2h1V461.6h-1ZM239 436.9h2V441.6h-2ZM241 436.3h1V441.6h-1ZM245 435.7h1V441.6h-1ZM246 435.1h1V441.6h-1ZM247 435.8h1V441.6h-1ZM248 436.8h1V441.6h-1ZM248 459.6h1V463.7h-1ZM250 437.3h1V441.6h-1ZM251 435.9h1V441.6h-1ZM251 459.7h1V462.9h-1ZM255 459.3h2V462.6h-2ZM257 435.3h1V441.6h-1ZM259 435.0h2V441.6h-2ZM261 436.0h1V441.6h-1ZM264 436.7h2V441.6h-2ZM266 459.2h1V462.7h-1ZM267 435.5h2V441.6h-2ZM273 458.9h1V463.9h-1ZM277 459.3h2V463.2h-2ZM279 435.8h1V441.6h-1ZM282 457.2h1V463.0h-1ZM288 457.9h1V461.3h-1ZM290 459.7h2V462.3h-2ZM299 457.8h2V464.9h-2ZM301 436.5h1V441.6h-1ZM301 459.0h1V462.1h-1ZM302 435.4h1V441.6h-1ZM304 435.5h2V441.6h-2ZM312 436.4h2V441.6h-2ZM316 457.1h1V462.5h-1ZM317 435.8h2V441.6h-2ZM317 457.1h2V462.5h-2ZM319 458.1h2V461.8h-2ZM323 436.4h1V441.6h-1ZM324 458.2h1V461.4h-1ZM328 435.7h2V441.6h-2ZM328 458.7h2V461.7h-2ZM330 437.3h1V441.6h-1ZM330 458.3h1V460.8h-1ZM331 459.0h1V462.9h-1ZM333 435.8h2V441.6h-2ZM344 435.2h2V441.6h-2ZM347 459.5h1V461.7h-1ZM353 436.3h1V441.6h-1ZM360 436.4h2V441.6h-2ZM363 457.7h1V462.2h-1ZM368 435.7h2V441.6h-2ZM368 458.7h2V461.2h-2ZM371 459.4h1V461.1h-1ZM375 459.9h2V462.5h-2ZM377 457.8h1V463.0h-1ZM378 457.6h1V462.2h-1ZM379 457.4h2V462.5h-2ZM382 436.5h1V441.6h-1ZM382 459.4h1V461.4h-1ZM386 436.2h1V441.6h-1ZM387 459.3h2V462.3h-2ZM391 457.2h1V461.5h-1ZM396 459.9h2V462.8h-2ZM398 459.7h2V461.0h-2ZM401 436.0h1V441.6h-1ZM404 457.8h1V462.1h-1ZM406 458.9h1V461.9h-1ZM408 458.4h1V462.2h-1ZM409 435.0h1V441.6h-1ZM416 457.3h2V461.8h-2ZM424 457.2h1V463.2h-1ZM426 436.2h1V441.6h-1ZM431 457.2h1V461.6h-1ZM432 437.1h2V441.6h-2ZM434 437.4h2V441.6h-2ZM436 436.5h1V441.6h-1ZM438 436.5h2V441.6h-2ZM438 458.5h2V463.0h-2ZM442 459.5h2V462.6h-2ZM445 436.4h1V441.6h-1ZM445 458.2h1V463.2h-1ZM446 435.9h2V441.6h-2ZM448 457.7h1V462.4h-1ZM452 457.7h1V464.0h-1ZM454 459.9h1V462.4h-1ZM456 457.1h1V462.6h-1ZM463 458.5h1V460.3h-1ZM468 435.1h1V441.6h-1ZM474 435.9h1V441.6h-1ZM476 436.3h2V441.6h-2ZM478 458.1h1V462.4h-1ZM481 435.1h1V441.6h-1ZM481 457.1h1V461.6h-1ZM482 458.6h1V461.0h-1ZM485 458.2h1V463.9h-1ZM486 435.8h1V441.6h-1ZM487 436.0h1V441.6h-1ZM487 459.2h1V462.3h-1ZM488 437.2h1V441.6h-1ZM492 458.0h1V463.7h-1ZM493 435.3h1V441.6h-1ZM494 457.2h1V461.1h-1ZM497 458.3h1V463.2h-1ZM498 436.7h1V441.6h-1ZM499 457.8h2V461.5h-2ZM501 437.3h1V441.6h-1ZM502 437.0h2V441.6h-2ZM502 457.8h2V462.6h-2ZM508 435.5h1V441.6h-1ZM509 457.6h2V461.0h-2ZM511 459.2h2V462.0h-2ZM513 458.7h1V462.2h-1ZM516 435.0h1V441.6h-1ZM519 435.0h1V441.6h-1ZM520 458.7h1V461.7h-1ZM521 436.3h1V441.6h-1ZM521 458.3h1V462.0h-1ZM522 436.4h1V441.6h-1ZM526 435.0h1V441.6h-1ZM526 459.7h1V463.6h-1ZM527 459.8h1V462.9h-1ZM540 459.4h1V464.2h-1ZM546 457.9h1V463.1h-1ZM549 436.9h1V441.6h-1ZM551 435.1h1V441.6h-1ZM553 458.2h2V462.6h-2ZM555 457.3h1V461.0h-1ZM557 457.1h1V460.5h-1ZM558 435.8h2V441.6h-2ZM558 458.7h2V462.2h-2ZM565 458.0h1V462.5h-1ZM569 459.7h1V463.1h-1ZM572 458.2h1V462.4h-1ZM574 458.8h1V462.7h-1ZM576 435.8h1V441.6h-1ZM576 457.5h1V462.1h-1ZM577 459.6h1V462.9h-1ZM579 458.6h1V461.9h-1ZM581 436.3h2V441.6h-2ZM583 435.2h1V441.6h-1ZM584 458.5h1V464.1h-1ZM586 457.2h1V462.6h-1ZM588 457.7h1V461.2h-1ZM591 435.8h1V441.6h-1ZM593 458.3h2V461.5h-2ZM597 457.3h1V462.1h-1ZM598 459.0h1V462.1h-1ZM599 457.9h1V463.5h-1ZM606 436.3h1V441.6h-1ZM608 459.7h1V463.0h-1ZM609 436.1h1V441.6h-1ZM611 458.9h1V462.4h-1ZM612 436.1h1V441.6h-1ZM615 435.2h1V441.6h-1ZM615 459.4h1V461.5h-1ZM616 458.9h1V463.1h-1ZM617 436.9h1V441.6h-1ZM618 458.4h2V460.9h-2ZM620 436.5h2V441.6h-2ZM624 457.6h1V462.0h-1ZM627 435.6h1V441.6h-1ZM628 458.6h1V464.6h-1ZM629 458.7h1V460.9h-1ZM637 436.4h1V441.6h-1ZM640 458.5h1V462.9h-1ZM642 459.2h1V461.2h-1ZM643 457.0h2V462.0h-2ZM647 435.8h2V441.6h-2ZM650 435.8h1V441.6h-1ZM653 458.0h1V461.0h-1ZM663 459.3h2V463.2h-2ZM665 458.7h1V461.9h-1ZM670 436.1h1V441.6h-1ZM673 436.7h1V441.6h-1ZM683 435.8h1V441.6h-1ZM684 436.1h1V441.6h-1ZM687 436.0h1V441.6h-1ZM687 458.6h1V462.8h-1ZM691 436.2h1V441.6h-1ZM692 435.8h2V441.6h-2ZM694 436.2h1V441.6h-1ZM700 458.3h1V462.1h-1ZM703 457.8h1V461.4h-1ZM710 459.3h1V462.2h-1ZM713 459.2h2V462.0h-2ZM721 458.1h1V461.9h-1ZM722 457.7h1V461.9h-1ZM726 459.6h1V461.3h-1ZM728 436.5h1V441.6h-1ZM729 436.5h1V441.6h-1ZM731 435.0h2V441.6h-2ZM735 437.0h1V441.6h-1ZM736 436.4h1V441.6h-1ZM736 458.3h1V464.6h-1ZM740 459.6h1V461.5h-1ZM742 436.4h2V441.6h-2ZM745 436.6h1V441.6h-1ZM745 457.7h1V461.1h-1ZM746 458.6h1V461.8h-1ZM747 458.7h1V461.4h-1ZM749 436.4h2V441.6h-2ZM753 437.3h1V441.6h-1ZM755 459.4h1V462.7h-1ZM757 436.2h2V441.6h-2ZM757 459.6h2V464.5h-2ZM760 459.8h1V464.1h-1ZM764 459.0h1V463.6h-1ZM766 436.6h2V441.6h-2ZM768 435.6h1V441.6h-1ZM769 435.2h1V441.6h-1ZM771 435.2h2V441.6h-2ZM779 457.1h2V462.0h-2ZM782 460.0h1V463.2h-1ZM785 436.6h1V441.6h-1ZM787 435.8h1V441.6h-1ZM789 459.4h1V462.6h-1ZM790 437.5h2V441.6h-2ZM793 458.3h1V461.8h-1ZM797 459.2h1V464.1h-1ZM801 457.4h1V462.0h-1ZM803 458.9h1V461.8h-1ZM804 458.1h1V461.6h-1ZM805 458.1h1V462.2h-1ZM807 436.4h1V441.6h-1ZM807 459.2h1V461.8h-1ZM809 459.0h1V460.8h-1ZM812 435.3h1V441.6h-1ZM814 435.9h1V441.6h-1ZM815 459.0h1V461.3h-1ZM816 458.9h1V461.1h-1ZM822 458.6h1V461.0h-1ZM823 435.9h1V441.6h-1ZM828 459.2h1V460.1h-1ZM830 458.4h1V462.1h-1ZM831 436.2h1V441.6h-1ZM831 458.6h1V463.0h-1ZM832 436.5h1V441.6h-1ZM834 457.4h1V463.1h-1ZM836 435.1h1V441.6h-1ZM836 458.9h1V461.9h-1ZM841 458.9h2V461.7h-2ZM843 436.1h1V441.6h-1ZM846 435.4h1V441.6h-1ZM847 436.2h1V441.6h-1ZM849 459.0h2V462.1h-2ZM854 459.0h1V460.8h-1ZM856 457.5h2V463.1h-2ZM862 457.3h2V462.2h-2ZM864 458.1h2V462.4h-2ZM866 435.7h1V441.6h-1ZM867 436.9h1V441.6h-1ZM868 435.5h1V441.6h-1ZM869 457.2h2V462.1h-2ZM872 436.4h1V441.6h-1ZM873 435.3h1V441.6h-1ZM874 458.0h1V461.5h-1ZM878 435.9h2V441.6h-2ZM884 458.2h2V462.6h-2ZM886 435.8h1V441.6h-1ZM888 435.4h2V441.6h-2ZM890 435.3h1V441.6h-1ZM891 435.8h1V441.6h-1ZM891 459.1h1V462.0h-1ZM894 457.7h1V460.8h-1ZM895 457.4h1V462.2h-1ZM896 435.3h2V441.6h-2ZM899 459.8h1V462.5h-1ZM900 459.2h1V462.2h-1ZM904 458.6h1V461.5h-1ZM906 433.8h1V441.6h-1ZM907 435.8h1V441.6h-1ZM908 457.5h1V461.3h-1ZM909 457.1h2V464.4h-2ZM911 459.0h1V460.5h-1ZM918 459.2h1V460.2h-1ZM923 457.3h1V463.3h-1ZM924 459.4h1V461.2h-1ZM925 435.6h2V441.6h-2ZM928 435.3h2V441.6h-2ZM928 459.1h2V462.3h-2ZM930 436.8h1V441.6h-1ZM930 458.3h1V463.2h-1ZM931 437.4h1V441.6h-1ZM931 457.5h1V462.3h-1ZM933 436.1h1V441.6h-1ZM934 458.8h2V465.1h-2ZM937 436.0h1V441.6h-1ZM938 435.4h2V441.6h-2ZM943 437.4h1V441.6h-1ZM944 459.6h1V463.5h-1ZM945 457.0h1V462.5h-1ZM948 436.5h1V441.6h-1ZM951 459.2h1V460.2h-1ZM952 436.1h1V441.6h-1ZM952 457.4h1V463.1h-1ZM953 459.4h2V463.2h-2ZM957 459.4h1V463.0h-1ZM960 433.7h1V441.6h-1ZM963 436.3h2V441.6h-2ZM963 457.4h2V463.6h-2Z" fill="#524c00"/><path d="M21 455.0h1v4.1h-1ZM27 455.0h1v4.0h-1ZM31 437.2h1V441.4h-1ZM31 455.0h1v5.7h-1ZM33 436.9h1V441.4h-1ZM56 455.0h1v4.8h-1ZM94 455.0h1v2.7h-1ZM97 438.1h1V441.4h-1ZM99 437.8h1V441.4h-1ZM100 455.0h1v5.4h-1ZM102 434.3h1V441.4h-1ZM107 455.0h1v4.6h-1ZM118 436.1h1V441.4h-1ZM121 437.6h1V441.4h-1ZM125 436.3h1V441.4h-1ZM128 436.6h1V441.4h-1ZM131 455.0h1v5.5h-1ZM156 437.0h1V441.4h-1ZM159 437.6h1V441.4h-1ZM161 438.3h1V441.4h-1ZM188 455.0h1v3.8h-1ZM193 437.1h1V441.4h-1ZM193 455.0h1v2.9h-1ZM200 436.0h1V441.4h-1ZM202 437.4h1V441.4h-1ZM203 436.9h1V441.4h-1ZM214 436.2h1V441.4h-1ZM241 455.0h1v4.2h-1ZM252 437.7h2V441.4h-2ZM258 438.1h1V441.4h-1ZM262 437.0h2V441.4h-2ZM292 436.5h1V441.4h-1ZM298 437.8h1V441.4h-1ZM323 455.0h1v3.8h-1ZM324 437.8h1V441.4h-1ZM325 437.3h1V441.4h-1ZM335 436.3h1V441.4h-1ZM340 436.2h2V441.4h-2ZM340 455.0h2v2.9h-2ZM354 455.0h2v5.2h-2ZM356 436.6h1V441.4h-1ZM373 438.4h1V441.4h-1ZM378 438.8h1V441.4h-1ZM381 455.0h1v2.8h-1ZM400 455.0h1v4.1h-1ZM403 455.0h1v2.7h-1ZM406 436.8h1V441.4h-1ZM408 436.3h1V441.4h-1ZM414 436.0h1V441.4h-1ZM416 435.8h2V441.4h-2ZM429 455.0h2v5.8h-2ZM453 436.9h1V441.4h-1ZM456 435.9h1V441.4h-1ZM457 437.5h2V441.4h-2ZM461 438.4h1V441.4h-1ZM470 436.1h1V441.4h-1ZM482 436.1h1V441.4h-1ZM484 438.1h1V441.4h-1ZM484 455.0h1v4.9h-1ZM513 436.5h1V441.4h-1ZM519 455.0h1v4.0h-1ZM520 437.2h1V441.4h-1ZM522 455.0h1v5.2h-1ZM556 455.0h1v5.8h-1ZM560 455.0h2v3.7h-2ZM564 436.6h1V441.4h-1ZM565 437.3h1V441.4h-1ZM586 436.9h1V441.4h-1ZM591 455.0h1v2.6h-1ZM598 436.9h1V441.4h-1ZM620 455.0h2v5.9h-2ZM635 455.0h2v2.8h-2ZM645 436.9h1V441.4h-1ZM666 437.1h1V441.4h-1ZM677 436.1h2V441.4h-2ZM685 436.2h2V441.4h-2ZM697 437.9h2V441.4h-2ZM715 436.9h1V441.4h-1ZM716 436.0h2V441.4h-2ZM718 436.7h1V441.4h-1ZM721 437.6h1V441.4h-1ZM722 437.6h1V441.4h-1ZM723 455.0h1v5.7h-1ZM727 436.7h1V441.4h-1ZM733 455.0h2v5.6h-2ZM741 437.4h1V441.4h-1ZM742 455.0h2v3.5h-2ZM744 436.2h1V441.4h-1ZM770 436.1h1V441.4h-1ZM783 436.3h1V441.4h-1ZM795 436.5h2V441.4h-2ZM806 455.0h1v3.8h-1ZM823 455.0h1v2.8h-1ZM824 437.6h2V441.4h-2ZM824 455.0h2v3.0h-2ZM835 436.1h1V441.4h-1ZM839 437.3h2V441.4h-2ZM862 437.4h2V441.4h-2ZM871 438.0h1V441.4h-1ZM895 436.3h1V441.4h-1ZM898 435.9h1V441.4h-1ZM901 436.1h1V441.4h-1ZM902 437.4h2V441.4h-2ZM907 455.0h1v5.9h-1ZM924 438.1h1V441.4h-1ZM927 436.1h1V441.4h-1ZM942 455.0h1v5.3h-1Z" fill="#b4ac0c"/><defs><linearGradient id="core" gradientUnits="userSpaceOnUse" x1="0" y1="439.4" x2="0" y2="459.4"><stop offset="0" stop-color="#b0a808"/><stop offset="0.06" stop-color="#e0d818"/><stop offset="0.16" stop-color="#f6ee26"/><stop offset="0.45" stop-color="#fffa38"/><stop offset="0.66" stop-color="#f6ee26"/><stop offset="0.74" stop-color="#e8e01e"/><stop offset="0.84" stop-color="#ccc410"/><stop offset="1" stop-color="#a49c08"/></linearGradient></defs><path d="M9 440.1V440.1h1V441.1h1V439.1h1V439.1h1V440.1h1V440.4h1V440.1h1V441.1h1V439.7h1V439.7h1V441.1h1V439.1h1V440.1h1V440.7h1V440.4h1V441.1h1V439.7h1V439.7h1V439.7h1V439.1h1V440.4h1V439.7h1V440.7h1V440.7h1V440.1h1V441.1h1V440.7h1V441.1h1V440.4h1V441.1h1V439.7h1V440.1h1V440.1h1V440.1h1V440.1h1V440.1h1V440.1h1V441.1h1V441.1h1V440.1h1V441.1h1V439.1h1V439.1h1V439.1h1V439.1h1V440.4h1V441.1h1V440.4h1V439.7h1V440.1h1V440.1h1V440.4h1V440.4h1V440.1h1V439.7h1V440.4h1V440.1h1V439.7h1V441.1h1V439.1h1V440.4h1V439.7h1V439.7h1V440.4h1V440.4h1V440.7h1V440.7h1V439.7h1V440.7h1V441.1h1V440.4h1V440.1h1V439.1h1V440.1h1V441.1h1V440.4h1V440.4h1V440.7h1V440.4h1V441.1h1V440.1h1V440.1h1V440.4h1V440.1h1V440.7h1V440.1h1V440.4h1V440.4h1V441.1h1V440.7h1V440.1h1V439.1h1V439.7h1V440.7h1V440.1h1V440.4h1V440.4h1V440.7h1V440.4h1V439.7h1V440.4h1V440.1h1V440.4h1V439.7h1V440.4h1V439.1h1V440.4h1V440.4h1V440.4h1V440.4h1V441.1h1V441.1h1V440.7h1V440.7h1V440.1h1V439.7h1V440.7h1V440.1h1V440.4h1V440.4h1V439.1h1V440.7h1V439.1h1V440.4h1V441.1h1V440.7h1V440.4h1V439.7h1V440.1h1V441.1h1V440.4h1V440.4h1V440.4h1V440.7h1V441.1h1V440.7h1V439.1h1V441.1h1V439.7h1V439.1h1V440.4h1V440.4h1V441.1h1V440.1h1V440.4h1V440.4h1V440.4h1V439.7h1V440.1h1V440.1h1V440.1h1V440.4h1V440.4h1V439.7h1V439.1h1V441.1h1V439.7h1V440.4h1V440.1h1V440.1h1V440.4h1V440.4h1V439.1h1V440.7h1V439.1h1V440.4h1V440.7h1V439.7h1V441.1h1V440.1h1V439.1h1V440.4h1V440.4h1V440.7h1V440.4h1V440.4h1V440.1h1V439.1h1V440.1h1V439.1h1V440.7h1V440.4h1V440.4h1V439.1h1V440.1h1V439.1h1V439.7h1V440.1h1V440.1h1V439.7h1V440.7h1V439.1h1V439.1h1V440.4h1V440.4h1V439.7h1V439.7h1V439.7h1V439.1h1V440.1h1V440.7h1V440.7h1V440.4h1V440.7h1V440.7h1V440.4h1V440.4h1V439.1h1V440.4h1V440.4h1V440.4h1V440.4h1V440.7h1V439.7h1V440.4h1V439.7h1V440.1h1V440.1h1V440.7h1V440.7h1V441.1h1V440.1h1V440.1h1V439.1h1V440.1h1V439.7h1V441.1h1V441.1h1V439.7h1V439.1h1V439.7h1V441.1h1V439.1h1V441.1h1V440.7h1V440.4h1V441.1h1V440.1h1V441.1h1V440.1h1V439.7h1V439.7h1V440.4h1V440.7h1V440.4h1V440.4h1V439.1h1V441.1h1V440.1h1V440.4h1V439.1h1V440.4h1V440.4h1V440.4h1V440.1h1V439.1h1V440.7h1V440.7h1V440.4h1V440.4h1V439.1h1V439.7h1V440.4h1V440.4h1V440.7h1V440.4h1V439.1h1V439.7h1V441.1h1V441.1h1V440.4h1V440.7h1V441.1h1V440.7h1V439.7h1V441.1h1V440.4h1V441.1h1V439.7h1V439.1h1V440.4h1V441.1h1V440.4h1V440.4h1V440.7h1V440.7h1V440.7h1V440.4h1V440.4h1V439.1h1V439.1h1V440.4h1V441.1h1V439.1h1V440.4h1V439.7h1V440.4h1V439.7h1V440.4h1V440.4h1V440.4h1V439.7h1V440.7h1V440.4h1V440.7h1V440.1h1V440.1h1V440.4h1V440.7h1V441.1h1V440.4h1V440.4h1V439.7h1V441.1h1V440.4h1V439.1h1V440.4h1V440.1h1V440.7h1V440.4h1V439.7h1V440.1h1V439.7h1V440.1h1V439.1h1V441.1h1V440.4h1V440.1h1V440.4h1V439.1h1V440.1h1V440.1h1V440.4h1V439.1h1V441.1h1V440.1h1V440.4h1V439.1h1V441.1h1V439.7h1V439.7h1V441.1h1V441.1h1V439.7h1V440.4h1V439.7h1V439.1h1V440.4h1V440.4h1V440.7h1V440.4h1V439.7h1V440.1h1V440.4h1V440.4h1V440.1h1V441.1h1V440.1h1V440.1h1V441.1h1V439.7h1V440.4h1V439.1h1V439.7h1V440.7h1V440.7h1V440.4h1V440.1h1V440.7h1V441.1h1V439.7h1V440.4h1V439.7h1V440.7h1V440.7h1V440.1h1V440.4h1V441.1h1V439.7h1V440.4h1V440.7h1V440.1h1V439.1h1V441.1h1V439.1h1V441.1h1V439.1h1V440.7h1V439.7h1V440.4h1V441.1h1V441.1h1V440.4h1V439.1h1V439.1h1V441.1h1V439.7h1V440.4h1V440.4h1V440.7h1V440.4h1V440.1h1V440.7h1V440.4h1V440.7h1V439.1h1V440.4h1V440.7h1V439.7h1V439.7h1V441.1h1V439.7h1V440.1h1V440.7h1V440.4h1V440.4h1V440.4h1V439.1h1V441.1h1V439.7h1V439.7h1V441.1h1V440.1h1V440.1h1V440.7h1V439.1h1V439.1h1V441.1h1V440.4h1V440.7h1V440.4h1V440.4h1V439.7h1V440.4h1V439.1h1V440.1h1V440.4h1V440.4h1V440.4h1V440.4h1V439.7h1V440.4h1V439.7h1V440.4h1V439.1h1V441.1h1V440.1h1V440.1h1V441.1h1V440.4h1V440.4h1V440.4h1V440.1h1V440.7h1V440.4h1V439.1h1V440.7h1V440.4h1V439.7h1V439.7h1V441.1h1V440.7h1V440.4h1V440.4h1V440.1h1V440.7h1V439.1h1V441.1h1V440.4h1V440.1h1V441.1h1V440.7h1V440.1h1V441.1h1V440.4h1V440.4h1V440.4h1V439.1h1V439.7h1V441.1h1V440.4h1V439.7h1V441.1h1V439.7h1V439.7h1V440.4h1V440.4h1V440.4h1V439.7h1V440.1h1V440.1h1V440.1h1V439.7h1V440.4h1V441.1h1V440.4h1V440.1h1V440.7h1V440.4h1V441.1h1V440.4h1V439.1h1V440.1h1V440.4h1V440.4h1V440.1h1V441.1h1V441.1h1V439.1h1V440.1h1V440.7h1V440.4h1V440.4h1V439.7h1V440.7h1V440.1h1V440.4h1V439.1h1V441.1h1V440.7h1V439.7h1V440.7h1V440.7h1V439.7h1V439.1h1V440.4h1V440.4h1V440.1h1V439.7h1V440.4h1V439.7h1V440.1h1V439.1h1V440.7h1V440.7h1V440.4h1V441.1h1V440.1h1V439.7h1V441.1h1V440.7h1V440.1h1V440.7h1V440.1h1V440.4h1V440.1h1V440.1h1V440.4h1V439.7h1V440.1h1V440.7h1V440.4h1V441.1h1V439.7h1V440.4h1V439.7h1V439.1h1V439.1h1V440.4h1V440.4h1V440.1h1V440.1h1V441.1h1V441.1h1V439.7h1V441.1h1V439.1h1V440.4h1V440.4h1V439.1h1V441.1h1V439.1h1V441.1h1V440.1h1V439.1h1V440.7h1V439.7h1V439.7h1V439.1h1V440.4h1V439.7h1V439.7h1V441.1h1V439.7h1V440.1h1V439.7h1V440.1h1V440.4h1V440.4h1V440.4h1V441.1h1V440.4h1V441.1h1V439.1h1V440.1h1V439.7h1V440.4h1V440.1h1V440.7h1V441.1h1V440.1h1V440.1h1V440.4h1V440.4h1V441.1h1V439.7h1V439.7h1V439.7h1V439.7h1V441.1h1V440.4h1V441.1h1V440.4h1V440.7h1V440.7h1V440.1h1V441.1h1V440.1h1V439.7h1V441.1h1V440.4h1V439.7h1V440.1h1V440.7h1V440.1h1V440.4h1V440.1h1V440.4h1V440.1h1V441.1h1V440.4h1V439.1h1V440.4h1V440.1h1V439.7h1V440.4h1V439.1h1V440.4h1V439.7h1V439.7h1V440.1h1V439.7h1V439.1h1V439.1h1V439.1h1V440.1h1V440.7h1V440.7h1V440.4h1V441.1h1V439.7h1V440.7h1V439.7h1V441.1h1V441.1h1V440.1h1V439.7h1V439.7h1V440.4h1V440.4h1V440.7h1V440.7h1V439.1h1V440.7h1V439.7h1V439.1h1V440.7h1V439.7h1V440.4h1V439.7h1V440.4h1V440.4h1V440.1h1V440.4h1V439.7h1V441.1h1V440.4h1V439.1h1V440.7h1V439.7h1V441.1h1V439.7h1V440.4h1V440.4h1V439.7h1V439.7h1V441.1h1V441.1h1V439.7h1V440.1h1V440.4h1V439.1h1V439.7h1V441.1h1V440.7h1V440.4h1V440.4h1V439.7h1V441.1h1V440.4h1V439.1h1V439.7h1V440.7h1V440.4h1V440.4h1V440.7h1V441.1h1V440.7h1V441.1h1V440.7h1V441.1h1V440.4h1V439.1h1V440.4h1V440.4h1V439.1h1V440.7h1V440.7h1V441.1h1V439.7h1V440.7h1V440.4h1V440.4h1V440.4h1V440.1h1V439.7h1V440.4h1V441.1h1V441.1h1V439.7h1V441.1h1V440.4h1V440.1h1V440.4h1V439.1h1V440.7h1V440.4h1V441.1h1V439.7h1V440.1h1V440.4h1V440.4h1V440.4h1V440.4h1V439.1h1V440.7h1V439.7h1V440.7h1V440.4h1V439.1h1V440.4h1V439.7h1V439.1h1V440.4h1V440.1h1V439.1h1V441.1h1V439.7h1V440.4h1V440.4h1V440.4h1V439.7h1V439.1h1V440.4h1V441.1h1V440.1h1V440.4h1V440.7h1V441.1h1V440.1h1V440.4h1V439.7h1V440.7h1V440.4h1V440.4h1V439.7h1V440.7h1V440.7h1V440.4h1V439.1h1V441.1h1V440.4h1V440.4h1V439.7h1V440.4h1V441.1h1V440.4h1V440.7h1V439.1h1V440.4h1V440.7h1V440.7h1V441.1h1V440.1h1V441.1h1V439.7h1V440.4h1V439.7h1V440.4h1V439.7h1V440.7h1V440.1h1V440.4h1V440.1h1V440.4h1V439.1h1V440.4h1V440.7h1V439.7h1V440.1h1V441.1h1V440.4h1V440.4h1V439.1h1V440.7h1V439.1h1V440.4h1V440.4h1V441.1h1V439.7h1V439.1h1V440.7h1V440.1h1V439.7h1V441.1h1V440.7h1V441.1h1V439.7h1V439.7h1V441.1h1V439.7h1V440.4h1V439.7h1V440.7h1V440.4h1V440.7h1V440.7h1V439.7h1V439.7h1V439.1h1V441.1h1V440.1h1V439.7h1V440.7h1V439.7h1V440.1h1V441.1h1V440.7h1V440.7h1V439.1h1V439.7h1V440.1h1V440.7h1V440.4h1V440.4h1V440.7h1V439.7h1V441.1h1V440.4h1V440.7h1V440.4h1V439.1h1V439.1h1V440.4h1V440.1h1V440.4h1V440.1h1V441.1h1V439.7h1V439.7h1V440.4h1V439.7h1V440.1h1V441.1h1V440.4h1V439.1h1V440.4h1V440.7h1V440.4h1V440.4h1V439.1h1V440.1h1V440.7h1V440.7h1V439.1h1V439.7h1V440.1h1V439.7h1V440.1h1V440.7h1V439.1h1V440.4h1V440.7h1V440.4h1V441.1h1V440.4h1V441.1h1V439.7h1V439.7h1V440.4h1V440.1h1V440.1h1V439.7h1V440.4h1V440.4h1V441.1h1V440.4h1V439.7h1V440.4h1V440.1h1V440.7h1V439.7h1V439.1h1V440.7h1V440.4h1V439.7h1V439.7h1V440.4h1V440.7h1V440.4h1V440.4h1V439.7h1V440.4h1V441.1h1V441.1h1V439.1h1V440.7h1V440.1h1V440.1h1V439.1h1V441.1h1V441.1h1V439.7h1V440.7h1V440.4h1V440.4h1V440.4h1V440.7h1V440.4h1V440.1h1V440.4h1V440.1h1V439.7h1V439.7h1V440.7h1V440.4h1V440.4h1V439.1h1V440.7h1V439.1h1V440.4h1V440.4h1V441.1h1V441.1h1V440.7h1V440.4h1V457.9h-1V454.8h-1V456.5h-1V454.3h-1V457.9h-1V454.3h-1V454.8h-1V454.8h-1V457.3h-1V456.5h-1V456.5h-1V457.3h-1V454.8h-1V455.3h-1V454.8h-1V457.3h-1V455.3h-1V457.3h-1V457.3h-1V454.3h-1V456.5h-1V457.3h-1V454.3h-1V456.5h-1V455.9h-1V457.3h-1V454.8h-1V457.9h-1V455.3h-1V454.8h-1V457.9h-1V457.9h-1V456.5h-1V455.3h-1V457.3h-1V455.3h-1V454.8h-1V457.9h-1V455.3h-1V457.3h-1V457.9h-1V455.3h-1V457.9h-1V454.8h-1V455.3h-1V457.9h-1V457.3h-1V454.8h-1V457.3h-1V454.3h-1V456.5h-1V455.3h-1V455.3h-1V457.9h-1V454.3h-1V457.3h-1V457.9h-1V455.3h-1V457.3h-1V455.3h-1V454.3h-1V457.9h-1V456.5h-1V456.5h-1V454.8h-1V457.9h-1V455.9h-1V456.5h-1V457.3h-1V457.9h-1V455.3h-1V455.3h-1V457.9h-1V456.5h-1V454.3h-1V457.3h-1V454.8h-1V454.8h-1V456.5h-1V456.5h-1V454.8h-1V455.3h-1V454.8h-1V455.9h-1V456.5h-1V455.3h-1V454.8h-1V457.9h-1V455.3h-1V456.5h-1V455.3h-1V455.3h-1V457.9h-1V457.3h-1V457.9h-1V454.8h-1V457.9h-1V454.8h-1V457.9h-1V457.9h-1V456.5h-1V454.3h-1V455.9h-1V455.3h-1V455.9h-1V454.3h-1V454.3h-1V455.9h-1V455.9h-1V457.3h-1V455.9h-1V455.3h-1V455.9h-1V457.3h-1V455.3h-1V454.8h-1V457.3h-1V454.3h-1V456.5h-1V456.5h-1V457.9h-1V455.3h-1V457.9h-1V454.8h-1V455.3h-1V456.5h-1V455.3h-1V457.9h-1V455.3h-1V454.3h-1V454.3h-1V454.3h-1V455.9h-1V456.5h-1V457.9h-1V455.9h-1V456.5h-1V455.3h-1V457.3h-1V456.5h-1V454.8h-1V454.3h-1V455.9h-1V457.9h-1V457.3h-1V457.3h-1V455.3h-1V454.3h-1V455.9h-1V457.3h-1V457.3h-1V455.3h-1V457.3h-1V457.3h-1V455.3h-1V454.8h-1V454.8h-1V454.3h-1V455.3h-1V455.9h-1V455.3h-1V454.3h-1V455.3h-1V454.8h-1V454.8h-1V455.3h-1V455.9h-1V456.5h-1V455.3h-1V455.9h-1V455.9h-1V456.5h-1V456.5h-1V456.5h-1V454.8h-1V454.3h-1V455.3h-1V455.3h-1V456.5h-1V455.3h-1V455.3h-1V456.5h-1V457.9h-1V454.3h-1V454.8h-1V454.8h-1V457.9h-1V456.5h-1V457.9h-1V457.3h-1V454.3h-1V454.3h-1V455.3h-1V455.3h-1V455.9h-1V455.9h-1V457.9h-1V454.3h-1V457.9h-1V455.3h-1V457.9h-1V454.8h-1V454.3h-1V455.3h-1V454.3h-1V454.8h-1V455.3h-1V455.3h-1V455.3h-1V454.3h-1V457.9h-1V455.9h-1V454.3h-1V455.3h-1V454.8h-1V456.5h-1V455.3h-1V455.3h-1V456.5h-1V454.8h-1V457.3h-1V454.3h-1V455.3h-1V454.8h-1V456.5h-1V455.9h-1V455.3h-1V455.3h-1V454.3h-1V455.3h-1V457.9h-1V455.9h-1V455.3h-1V457.3h-1V455.9h-1V457.3h-1V454.3h-1V454.8h-1V456.5h-1V455.9h-1V455.3h-1V454.8h-1V457.3h-1V456.5h-1V457.3h-1V455.3h-1V457.3h-1V455.9h-1V457.9h-1V457.9h-1V456.5h-1V457.3h-1V455.3h-1V454.8h-1V454.3h-1V455.3h-1V457.9h-1V457.3h-1V455.3h-1V457.9h-1V454.8h-1V454.3h-1V455.9h-1V454.8h-1V457.3h-1V455.3h-1V455.3h-1V456.5h-1V457.3h-1V454.8h-1V455.3h-1V455.3h-1V455.9h-1V455.3h-1V455.3h-1V456.5h-1V456.5h-1V455.9h-1V457.9h-1V454.3h-1V456.5h-1V455.3h-1V457.9h-1V454.3h-1V455.3h-1V457.3h-1V457.9h-1V455.3h-1V456.5h-1V455.9h-1V457.3h-1V455.3h-1V455.3h-1V455.3h-1V455.3h-1V456.5h-1V455.3h-1V457.9h-1V456.5h-1V456.5h-1V457.9h-1V455.9h-1V457.3h-1V455.3h-1V454.8h-1V454.3h-1V457.9h-1V455.3h-1V457.3h-1V456.5h-1V456.5h-1V454.3h-1V457.3h-1V456.5h-1V456.5h-1V456.5h-1V457.9h-1V455.3h-1V457.9h-1V454.3h-1V454.3h-1V455.9h-1V455.9h-1V455.9h-1V454.3h-1V456.5h-1V457.9h-1V454.8h-1V455.9h-1V456.5h-1V455.3h-1V454.3h-1V455.3h-1V456.5h-1V454.8h-1V455.9h-1V456.5h-1V457.9h-1V455.9h-1V455.3h-1V455.9h-1V454.3h-1V455.3h-1V454.8h-1V455.9h-1V455.3h-1V455.3h-1V455.3h-1V456.5h-1V455.3h-1V457.3h-1V456.5h-1V456.5h-1V457.9h-1V455.3h-1V455.3h-1V455.3h-1V456.5h-1V455.9h-1V455.3h-1V457.3h-1V455.3h-1V457.3h-1V457.9h-1V455.9h-1V455.9h-1V454.8h-1V457.3h-1V457.3h-1V456.5h-1V454.3h-1V455.9h-1V455.3h-1V454.3h-1V455.3h-1V457.3h-1V455.9h-1V456.5h-1V454.3h-1V455.3h-1V455.3h-1V455.3h-1V455.3h-1V455.3h-1V455.9h-1V455.3h-1V455.9h-1V454.3h-1V455.3h-1V454.8h-1V455.3h-1V454.3h-1V455.3h-1V455.3h-1V455.9h-1V455.3h-1V457.3h-1V454.3h-1V455.3h-1V455.9h-1V455.3h-1V457.9h-1V454.3h-1V456.5h-1V455.3h-1V456.5h-1V455.9h-1V455.9h-1V454.8h-1V455.3h-1V454.8h-1V457.3h-1V457.9h-1V455.3h-1V454.3h-1V457.9h-1V457.9h-1V456.5h-1V455.3h-1V457.3h-1V456.5h-1V457.9h-1V455.3h-1V455.3h-1V457.3h-1V455.3h-1V456.5h-1V455.9h-1V455.3h-1V457.3h-1V457.9h-1V455.9h-1V455.3h-1V457.3h-1V457.9h-1V457.3h-1V455.3h-1V455.3h-1V456.5h-1V454.3h-1V454.3h-1V456.5h-1V454.3h-1V454.8h-1V454.3h-1V455.3h-1V454.8h-1V454.3h-1V455.9h-1V455.3h-1V457.3h-1V454.3h-1V455.9h-1V456.5h-1V455.3h-1V455.9h-1V454.3h-1V455.9h-1V454.8h-1V456.5h-1V457.9h-1V455.9h-1V455.3h-1V455.9h-1V457.9h-1V456.5h-1V455.3h-1V457.3h-1V455.9h-1V457.3h-1V454.8h-1V454.8h-1V455.9h-1V455.9h-1V454.3h-1V457.9h-1V455.9h-1V456.5h-1V454.3h-1V455.9h-1V454.3h-1V455.3h-1V457.3h-1V455.3h-1V454.3h-1V456.5h-1V457.3h-1V455.3h-1V457.3h-1V456.5h-1V455.9h-1V455.9h-1V454.8h-1V457.3h-1V455.3h-1V455.3h-1V457.3h-1V455.3h-1V457.9h-1V454.3h-1V454.3h-1V454.3h-1V457.3h-1V455.9h-1V454.3h-1V455.3h-1V455.3h-1V454.8h-1V455.3h-1V456.5h-1V455.9h-1V454.3h-1V454.3h-1V457.9h-1V457.9h-1V455.3h-1V456.5h-1V454.8h-1V455.9h-1V457.3h-1V455.3h-1V455.3h-1V455.3h-1V455.3h-1V456.5h-1V457.9h-1V456.5h-1V454.8h-1V457.3h-1V457.9h-1V456.5h-1V455.3h-1V456.5h-1V455.9h-1V456.5h-1V454.3h-1V454.8h-1V457.9h-1V454.3h-1V457.9h-1V454.8h-1V457.3h-1V455.9h-1V456.5h-1V457.3h-1V457.9h-1V454.8h-1V455.3h-1V455.9h-1V457.9h-1V455.3h-1V454.3h-1V454.8h-1V457.9h-1V455.9h-1V454.3h-1V455.3h-1V456.5h-1V454.8h-1V457.3h-1V454.3h-1V457.3h-1V455.3h-1V455.9h-1V455.3h-1V454.3h-1V454.8h-1V457.9h-1V454.3h-1V454.3h-1V455.3h-1V455.9h-1V455.9h-1V455.3h-1V455.3h-1V456.5h-1V457.9h-1V456.5h-1V455.3h-1V456.5h-1V457.9h-1V455.3h-1V455.9h-1V455.9h-1V454.3h-1V454.3h-1V457.9h-1V455.3h-1V454.3h-1V454.3h-1V455.3h-1V455.9h-1V457.9h-1V454.3h-1V455.3h-1V457.3h-1V455.3h-1V456.5h-1V455.9h-1V454.3h-1V455.3h-1V455.9h-1V454.3h-1V455.9h-1V457.3h-1V455.3h-1V455.9h-1V455.3h-1V454.8h-1V457.3h-1V454.8h-1V454.3h-1V455.9h-1V455.9h-1V455.9h-1V457.9h-1V454.8h-1V454.8h-1V457.3h-1V457.3h-1V454.8h-1V456.5h-1V454.8h-1V455.3h-1V454.8h-1V455.3h-1V455.3h-1V455.9h-1V454.8h-1V454.8h-1V455.9h-1V456.5h-1V457.3h-1V455.3h-1V455.3h-1V456.5h-1V455.3h-1V454.3h-1V455.9h-1V457.9h-1V455.3h-1V454.3h-1V456.5h-1V457.9h-1V454.3h-1V455.3h-1V457.9h-1V457.9h-1V454.3h-1V455.3h-1V454.3h-1V457.9h-1V456.5h-1V454.8h-1V454.8h-1V456.5h-1V457.3h-1V457.9h-1V455.9h-1V457.3h-1V457.9h-1V456.5h-1V457.3h-1V455.9h-1V457.9h-1V454.8h-1V456.5h-1V457.9h-1V457.3h-1V457.9h-1V457.9h-1V456.5h-1V456.5h-1V455.3h-1V455.9h-1V456.5h-1V455.3h-1V457.9h-1V455.3h-1V457.9h-1V454.8h-1V454.8h-1V454.3h-1V454.8h-1V457.3h-1V457.9h-1V457.9h-1V455.9h-1V457.9h-1V457.9h-1V454.8h-1V454.8h-1V454.3h-1V455.3h-1V455.3h-1V457.9h-1V455.3h-1V455.9h-1V454.8h-1V455.3h-1V455.3h-1V455.9h-1V456.5h-1V457.9h-1V454.3h-1V454.3h-1V454.8h-1V457.3h-1V455.3h-1V457.9h-1V457.3h-1V455.9h-1V455.3h-1V455.3h-1V455.3h-1V457.3h-1V457.3h-1V454.8h-1V457.3h-1V457.3h-1V454.8h-1V456.5h-1V455.3h-1V455.3h-1V454.8h-1V455.3h-1V454.3h-1V455.9h-1V454.8h-1V456.5h-1V457.3h-1V456.5h-1V454.3h-1V455.9h-1V456.5h-1V455.3h-1V455.3h-1V454.3h-1V454.3h-1V457.9h-1V457.3h-1V454.8h-1V454.3h-1V457.9h-1V455.3h-1V457.9h-1V457.9h-1V457.9h-1V454.3h-1V454.3h-1V454.8h-1V455.3h-1V455.3h-1V455.9h-1V457.3h-1V455.9h-1V457.3h-1V454.8h-1V454.3h-1V457.9h-1V455.3h-1V455.9h-1V455.9h-1V454.8h-1V455.9h-1V455.9h-1V455.3h-1V455.3h-1V457.9h-1V454.3h-1V454.3h-1V455.3h-1V455.9h-1V455.9h-1V454.3h-1V455.3h-1V455.3h-1V454.3h-1V455.3h-1V454.8h-1V455.9h-1V455.3h-1V457.9h-1V455.9h-1V457.3h-1V455.3h-1V456.5h-1V455.3h-1V455.3h-1V454.3h-1V455.3h-1V454.8h-1V457.9h-1V455.3h-1V455.3h-1V456.5h-1V454.8h-1V457.3h-1V457.3h-1V454.3h-1V457.3h-1V454.8h-1V455.3h-1V456.5h-1V454.3h-1V455.3h-1V455.3h-1V454.8h-1V455.9h-1V454.8h-1V455.3h-1V455.9h-1V457.9h-1V457.3h-1V455.3h-1V455.3h-1V457.9h-1V455.9h-1V454.8h-1V454.8h-1V454.3h-1V455.3h-1V454.3h-1V456.5h-1V455.9h-1V455.3h-1V457.9h-1V455.3h-1V454.3h-1V457.9h-1V456.5h-1V457.3h-1V454.8h-1V457.9h-1V455.9h-1V457.9h-1V455.3h-1V455.3h-1V457.3h-1V457.3h-1V454.3h-1V455.9h-1V454.3h-1V455.3h-1V457.9h-1V454.3h-1V457.9h-1V457.3h-1V454.3h-1V455.9h-1V457.9h-1V454.8h-1V457.3h-1V455.9h-1V457.3h-1V454.3h-1V457.3h-1V455.9h-1V456.5h-1V454.8h-1V457.3h-1V455.3h-1V456.5h-1V455.3h-1V457.9h-1V454.3h-1V457.3h-1V455.3h-1V454.3h-1V457.9h-1V456.5h-1V457.9h-1V456.5h-1V455.3h-1V457.9h-1V455.3h-1V457.9h-1V454.8h-1V454.8h-1V457.3h-1V455.3h-1V454.8h-1V456.5h-1V455.3h-1V455.3h-1V455.3h-1V455.9h-1V454.8h-1V454.3h-1V454.8h-1V455.9h-1V455.3h-1V454.3h-1V455.3h-1V454.3h-1V454.3h-1V455.3h-1V454.3h-1V457.3h-1V455.9h-1V455.3h-1V455.9h-1V455.3h-1V457.3h-1V457.9h-1V455.9h-1V455.3h-1V455.3h-1V457.9h-1V455.3h-1V456.5h-1V455.3h-1V456.5h-1V454.8h-1V454.8h-1V457.3h-1V454.3h-1V457.3h-1V455.9h-1V457.9h-1V454.3h-1V454.3h-1V455.9h-1V455.9h-1V455.3h-1V455.3h-1V455.3h-1V454.3h-1V455.3h-1V456.5h-1V457.3h-1V457.9h-1V454.3h-1V457.9h-1V454.8h-1V456.5h-1V456.5h-1V457.3h-1V457.3h-1V456.5h-1V457.9h-1V454.8h-1V454.8h-1V455.3h-1V455.3h-1V454.8h-1V454.3h-1V457.3h-1V454.8h-1V455.9h-1V457.9h-1V454.8h-1V457.9h-1V454.8h-1V457.3h-1V454.3h-1Z" fill="url(#core)"/><line x1="31" y1="448.4" x2="963.2" y2="448.4" stroke="#dcdc80" stroke-width="1" stroke-dasharray="3 2.4"/><rect x="486.9" y="50" width="3.2" height="501" fill="#fff" opacity="0.045"/><rect x="487.95" y="50" width="1.15" height="501" fill="#fff" opacity="0.27"/><rect x="802" y="36.6" width="1.2" height="514.4" fill="#fff" opacity="0.5"/><line x1="489.5" y1="152.1" x2="802" y2="152.1" stroke="#420808" stroke-width="1" stroke-dasharray="7.2 4.4"/><g stroke="#d8d8d8" stroke-width="0.9" fill="none"><circle cx="488.5" cy="129.6" r="2.3" fill="#000"/><line x1="491.00" y1="132.10" x2="493.20" y2="134.30"/><line x1="491.00" y1="127.10" x2="493.20" y2="124.90"/><line x1="486.00" y1="132.10" x2="483.80" y2="134.30"/><line x1="486.00" y1="127.10" x2="483.80" y2="124.90"/></g><g stroke="#d8d8d8" stroke-width="0.9" fill="none"><circle cx="802.7" cy="124.4" r="2.3" fill="#000"/><line x1="805.20" y1="126.90" x2="807.40" y2="129.10"/><line x1="805.20" y1="121.90" x2="807.40" y2="119.70"/><line x1="800.20" y1="126.90" x2="798.00" y2="129.10"/><line x1="800.20" y1="121.90" x2="798.00" y2="119.70"/></g><polygon points="944.8,40.2 963.2,40.2 963.2,58.6" fill="#5a5a5a"/><g stroke="#d0d0d0" stroke-width="1.1" fill="none"><circle cx="959.4" cy="44" r="2.1"/><line x1="957.8" y1="45.6" x2="954.2" y2="49.4"/></g><polygon points="10.7,442.2 24.3,442.2 29.8,448.2 24.3,454.2 10.7,454.2" fill="#f2ea38" stroke="#3c3800" stroke-width="0.7"/><polygon points="955.3,345.1 963.2,339.2 963.2,350.6" fill="#f8e820"/><polygon points="482,36.6 493.4,36.6 487.7,39.3" fill="#f08a20"/><path d="M482.7 50.2V53.6H486L487.9 56.8L489.8 53.6H492.8V50.2" fill="none" stroke="#f08a20" stroke-width="1.1"/><rect x="490" y="39" width="11.8" height="10.8" rx="2" fill="#2a2a2a"/><rect x="475.7" y="39" width="14.2" height="10.8" rx="1.8" fill="#dcd428"/><circle cx="495.7" cy="44.4" r="4.7" fill="#2283dc"/><rect x="789.8" y="39" width="12" height="10.8" rx="2" fill="#2a2a2a"/><rect x="801.7" y="39" width="14.2" height="10.8" rx="1.8" fill="#dcd428"/><circle cx="795" cy="44.1" r="4.7" fill="#2283dc"/></svg>
<div style="left:9.00px;top:23.00px;width:954.20px;height:13.60px;background:#353535;"></div>
<span style="left:15.90px;top:23.20px;font-size:9.5px;line-height:13px;color:#e4e4e4;transform:scaleX(0.9759);">Waveform View</span>
<div style="left:7.00px;top:551.00px;width:956.20px;height:1.80px;background:#cfcfcf;"></div>
<div style="left:963.20px;top:21.00px;width:7.80px;height:532.00px;background:#2d2d2d;"></div>
<span style="left:478.50px;top:38.70px;font-size:8.2px;line-height:12px;color:#3a3600;transform:scaleX(0.8967);">C1</span>
<span style="left:493.30px;top:39.30px;font-size:7.6px;line-height:11px;color:#e8f2ff;transform:scaleX(0.9666);">A</span>
<span style="left:792.70px;top:39.10px;font-size:7.6px;line-height:11px;color:#e8f2ff;transform:scaleX(0.9469);">B</span>
<span style="left:804.50px;top:38.70px;font-size:8.2px;line-height:12px;color:#3a3600;transform:scaleX(0.9063);">C1</span>
<span style="left:13.50px;top:443.30px;font-size:6.5px;line-height:10px;color:#3a3600;transform:scaleX(0.8898);">C 1</span>
<div style="left:411.00px;top:141.20px;width:76.80px;height:21.40px;background:#3a3a3a;border-radius:3px 0 0 3px;"></div>
<span style="left:413.20px;top:141.30px;font-size:8.3px;line-height:12px;color:#dcdcdc;transform:scaleX(1.0139);">t: 2.059 ns</span>
<span style="left:413.20px;top:149.80px;font-size:8.3px;line-height:12px;color:#dcdcdc;transform:scaleX(0.9980);">v: 3.095 V</span>
<div style="left:802.90px;top:141.20px;width:75.90px;height:21.20px;background:#3a3a3a;border-radius:0 3px 3px 0;"></div>
<span style="left:804.40px;top:141.10px;font-size:8.3px;line-height:12px;color:#dcdcdc;transform:scaleX(0.9937);">t: 6.554 ms</span>
<span style="left:804.40px;top:149.70px;font-size:8.3px;line-height:12px;color:#dcdcdc;transform:scaleX(0.9686);">v: 3.145 V</span>
<div style="left:557.20px;top:141.30px;width:175.40px;height:23.50px;background:#3a3a3a;border-radius:3px;"></div>
<span style="left:559.60px;top:142.20px;font-size:8.3px;line-height:12px;color:#dcdcdc;transform:scaleX(0.9957);">Δt: 6.554 ms</span>
<span style="left:559.60px;top:152.30px;font-size:8.3px;line-height:12px;color:#dcdcdc;transform:scaleX(0.9936);">Δv: 49.498 mV</span>
<span style="left:629.80px;top:142.20px;font-size:8.3px;line-height:12px;color:#dcdcdc;transform:scaleX(0.9779);">1/Δt:</span>
<span style="left:652.00px;top:142.20px;font-size:8.3px;line-height:12px;color:#dcdcdc;transform:scaleX(0.9726);">152.59 Hz</span>
<span style="left:629.80px;top:152.30px;font-size:8.3px;line-height:12px;color:#dcdcdc;transform:scaleX(1.0246);">Δv/Δt:</span>
<span style="left:657.60px;top:152.30px;font-size:8.3px;line-height:12px;color:#dcdcdc;transform:scaleX(0.9490);">7.55 V/s</span>
<div style="left:937.60px;top:83.90px;width:21.30px;height:10.00px;background:#000;"></div>
<span style="left:941.60px;top:83.40px;font-size:7.3px;line-height:11px;color:#e2da28;transform:scaleX(0.9563);">3.5 V</span>
<div style="left:945.80px;top:135.40px;width:15.40px;height:10.00px;background:#000;"></div>
<span style="left:949.80px;top:134.90px;font-size:7.3px;line-height:11px;color:#e2da28;transform:scaleX(0.9491);">3 V</span>
<div style="left:937.80px;top:186.70px;width:21.40px;height:10.00px;background:#000;"></div>
<span style="left:941.80px;top:186.20px;font-size:7.3px;line-height:11px;color:#e2da28;transform:scaleX(0.9621);">2.5 V</span>
<div style="left:945.80px;top:238.20px;width:15.40px;height:10.00px;background:#000;"></div>
<span style="left:949.80px;top:237.70px;font-size:7.3px;line-height:11px;color:#e2da28;transform:scaleX(0.9491);">2 V</span>
<div style="left:937.90px;top:289.60px;width:21.10px;height:10.00px;background:#000;"></div>
<span style="left:941.90px;top:289.10px;font-size:7.3px;line-height:11px;color:#e2da28;transform:scaleX(0.9445);">1.5 V</span>
<div style="left:946.00px;top:341.20px;width:8.20px;height:10.00px;background:#000;"></div>
<span style="left:950.00px;top:340.70px;font-size:7.3px;line-height:11px;color:#e2da28;transform:scaleX(0.7882);">1</span>
<div style="left:925.50px;top:392.50px;width:30.50px;height:10.00px;background:#000;"></div>
<span style="left:929.50px;top:392.00px;font-size:7.3px;line-height:11px;color:#e2da28;transform:scaleX(1.0136);">500 mV</span>
<span style="left:949.90px;top:443.60px;font-size:7.3px;line-height:11px;color:#6a6400;transform:scaleX(0.9948);">0 V</span>
<div style="left:922.50px;top:495.20px;width:33.00px;height:10.00px;background:#000;"></div>
<span style="left:926.50px;top:494.70px;font-size:7.3px;line-height:11px;color:#e2da28;transform:scaleX(1.0149);">-500 mV</span>
<span style="left:92.00px;top:539.00px;font-size:7.3px;line-height:11px;color:#a6a6a6;transform:scaleX(0.9808);">-8 ms</span>
<span style="left:188.20px;top:539.00px;font-size:7.3px;line-height:11px;color:#a6a6a6;transform:scaleX(0.9917);">-6 ms</span>
<span style="left:283.80px;top:539.00px;font-size:7.3px;line-height:11px;color:#a6a6a6;transform:scaleX(0.9808);">-4 ms</span>
<span style="left:379.70px;top:539.00px;font-size:7.3px;line-height:11px;color:#a6a6a6;transform:scaleX(0.9808);">-2 ms</span>
<span style="left:481.60px;top:539.00px;font-size:7.3px;line-height:11px;color:#a6a6a6;transform:scaleX(0.9447);">0 s</span>
<span style="left:572.80px;top:539.00px;font-size:7.3px;line-height:11px;color:#a6a6a6;transform:scaleX(0.9925);">2 ms</span>
<span style="left:668.50px;top:539.00px;font-size:7.3px;line-height:11px;color:#a6a6a6;transform:scaleX(0.9988);">4 ms</span>
<span style="left:764.30px;top:539.00px;font-size:7.3px;line-height:11px;color:#a6a6a6;transform:scaleX(0.9925);">6 ms</span>
<span style="left:860.00px;top:539.00px;font-size:7.3px;line-height:11px;color:#a6a6a6;transform:scaleX(0.9988);">8 ms</span>
<svg style="left:300px;top:21px;width:380px;height:16px" viewBox="300 21 380 16"><rect x="329" y="29.1" width="318" height="1.5" fill="#a2a2a2"/><path d="M332.6 25.4H328.6V34.8H332.6" fill="none" stroke="#d8d8d8" stroke-width="1"/><path d="M643 25.4H647.2V34.8H643" fill="none" stroke="#b8b8b8" stroke-width="1"/><line x1="593" y1="24" x2="593" y2="36" stroke="#d0d0d0" stroke-width="1.2" stroke-dasharray="2 1.2"/><polygon points="483.3,23 492.1,23 487.7,25.6" fill="#f08a20"/><path d="M484.2 26.8H491.8V33.4H489.6L488 35.6L486.4 33.4H484.2Z" fill="#2c2418" stroke="#f08a20" stroke-width="1"/><line x1="488.3" y1="24" x2="488.3" y2="36.6" stroke="#cfcfcf" stroke-width="0.8" stroke-dasharray="2 1.4"/></svg>
<span style="left:486.20px;top:25.30px;font-size:6.5px;line-height:10px;color:#f08a20;font-weight:bold;transform:scaleX(0.9319);">T</span>
<div style="left:971px;top:21px;width:88px;height:531.6px;border:1px solid #4b4b4d;border-right:none;box-sizing:border-box;"></div>
<span style="left:994.80px;top:21.00px;font-size:9px;line-height:13px;color:#fff;font-weight:bold;transform:scaleX(0.9175);">Add New...</span>
<div style="left:975.2px;top:36.3px;width:34.89999999999998px;height:19.800000000000004px;box-sizing:border-box;border:1px solid #625a52;border-radius:3.5px;background:linear-gradient(#323232,#2b2b2b 70%,#242424);"></div>
<div style="left:1014.2px;top:36.3px;width:34.700000000000045px;height:19.800000000000004px;box-sizing:border-box;border:1px solid #625a52;border-radius:3.5px;background:linear-gradient(#323232,#2b2b2b 70%,#242424);"></div>
<div style="left:975.2px;top:61.1px;width:34.89999999999998px;height:19.6px;box-sizing:border-box;border:1px solid #625a52;border-radius:3.5px;background:linear-gradient(#323232,#2b2b2b 70%,#242424);"></div>
<div style="left:1014.2px;top:61.1px;width:34.700000000000045px;height:19.6px;box-sizing:border-box;border:1px solid #625a52;border-radius:3.5px;background:linear-gradient(#323232,#2b2b2b 70%,#242424);"></div>
<div style="left:975.2px;top:85.7px;width:34.89999999999998px;height:19.89999999999999px;box-sizing:border-box;border:1px solid #625a52;border-radius:3.5px;background:linear-gradient(#323232,#2b2b2b 70%,#242424);"></div>
<div style="left:1014.2px;top:85.7px;width:34.700000000000045px;height:19.89999999999999px;box-sizing:border-box;border:1px solid #625a52;border-radius:3.5px;background:linear-gradient(#323232,#2b2b2b 70%,#242424);"></div>
<span style="left:978.80px;top:40.20px;font-size:8.6px;line-height:12px;color:#f0f0f0;transform:scaleX(0.9234);">Cursors</span>
<span style="left:1022.60px;top:40.20px;font-size:8.6px;line-height:12px;color:#f0f0f0;transform:scaleX(0.9909);">Note</span>
<span style="left:975.90px;top:64.60px;font-size:8.6px;line-height:12px;color:#f0f0f0;transform:scaleX(1.0012);">Measure</span>
<span style="left:1018.80px;top:64.60px;font-size:8.6px;line-height:12px;color:#f0f0f0;transform:scaleX(0.9395);">Search</span>
<span style="left:979.40px;top:84.90px;font-size:8.6px;line-height:12px;color:#f0f0f0;transform:scaleX(0.9136);">Results</span>
<span style="left:982.60px;top:93.60px;font-size:8.6px;line-height:12px;color:#f0f0f0;transform:scaleX(0.9533);">Table</span>
<span style="left:1023.60px;top:89.60px;font-size:8.6px;line-height:12px;color:#f0f0f0;transform:scaleX(1.0527);">Plot</span>
<div style="left:973.70px;top:109.90px;width:79.30px;height:0.90px;background:#5a544e;"></div>
<div style="left:973.70px;top:524.10px;width:79.30px;height:0.90px;background:#5a544e;"></div>
<div style="left:975.3px;top:529.4px;width:34.60000000000002px;height:19.399999999999977px;box-sizing:border-box;border:1px solid #625a52;border-radius:3.5px;background:linear-gradient(#323232,#2b2b2b 70%,#242424);"></div>
<svg style="left:975px;top:528px;width:80px;height:22px" viewBox="975 528 80 22"><g fill="none" stroke="#8a8a8a"><path d="M986.5 540.3V532.5H993.6V536.4" stroke-width="0.9" stroke-dasharray="0.9 1.3"/><line x1="986.5" y1="540.3" x2="989.6" y2="540.3" stroke-width="0.9" stroke-dasharray="0.9 1.3"/></g><g fill="#d6d6d6"><rect x="985.9" y="531.9" width="1.3" height="1.3"/><rect x="993" y="531.9" width="1.3" height="1.3"/><rect x="985.9" y="539.7" width="1.3" height="1.3"/><rect x="988.4" y="539.8" width="1.1" height="1.1"/></g><circle cx="993.6" cy="540" r="2.6" fill="#5c5c5c" stroke="#cfcfcf" stroke-width="1.1"/><line x1="995.7" y1="542.2" x2="998.7" y2="545.2" stroke="#c4c4c4" stroke-width="1.9"/><g fill="none" stroke="#c8c8c8" stroke-width="0.9"><ellipse cx="1036.5" cy="532.5" rx="7.1" ry="1.9" fill="#3c3c3c"/><path d="M1029.5 533.9Q1036.5 536.2 1043.5 533.9" stroke="#e0e0e0"/><path d="M1029.8 534.4L1031.4 546.1Q1036.5 548.9 1041.6 546.1L1043.2 534.4"/><line x1="1033.6" y1="536.6" x2="1034.2" y2="545.8"/><line x1="1036.5" y1="536.8" x2="1036.5" y2="546.2"/><line x1="1039.4" y1="536.6" x2="1038.8" y2="545.8"/></g></svg>
<div style="left:966.5px;top:280.6px;width:2px;height:2px;border-radius:1px;background:#cfcfcf"></div>
<div style="left:966.5px;top:285.6px;width:2px;height:2px;border-radius:1px;background:#cfcfcf"></div>
<div style="left:966.5px;top:290.6px;width:2px;height:2px;border-radius:1px;background:#cfcfcf"></div>
<div style="left:8.80px;top:554.00px;width:49.20px;height:44.00px;background:#c8c8c8;border-radius:3px;"></div>
<div style="left:8.80px;top:554.00px;width:49.20px;height:10.80px;background:#fff040;border-radius:3px 3px 0 0;"></div>
<span style="left:11.90px;top:552.80px;font-size:9.2px;line-height:13px;color:#101010;transform:scaleX(0.8130);-webkit-text-stroke:0.2px #101010;">Ch 1</span>
<span style="left:12.80px;top:565.30px;font-size:8.4px;line-height:12px;color:#0c0c0c;transform:scaleX(1.0042);-webkit-text-stroke:0.2px #0c0c0c;">500 mV/div</span>
<span style="left:12.80px;top:586.10px;font-size:8.4px;line-height:12px;color:#0c0c0c;transform:scaleX(0.9410);-webkit-text-stroke:0.2px #0c0c0c;">1 GHz</span>
<svg style="left:11px;top:576px;width:48px;height:20px" viewBox="11 576 48 20"><path d="M13.9 584.2V581.4Q14 578.5 17 578.3Q19.8 578.4 20.2 580.8" fill="none" stroke="#505050" stroke-width="1.3"/><path d="M15.6 580.9Q17 579.6 18.5 580.9" fill="none" stroke="#606060" stroke-width="0.9"/><path d="M18.6 581.2Q20.6 581.8 20.4 584" fill="none" stroke="#f0f0f0" stroke-width="1"/></svg>
<span style="left:49.00px;top:585.50px;font-size:5.6px;line-height:9px;color:#000;font-weight:bold;transform:scaleX(0.7418);">B</span>
<span style="left:52.00px;top:588.40px;font-size:4.6px;line-height:8px;color:#000;font-weight:bold;transform:scaleX(0.9503);">w</span>
<div style="left:382.6px;top:554.2px;width:21.9px;height:43.5px;box-sizing:border-box;border:1px solid #544d46;border-radius:3.5px;background:linear-gradient(#2f2f2f,#2a2a2a);"></div>
<div style="left:384.9px;top:558.1px;width:17.3px;height:1.6px;background:#1ca6b8"></div>
<span style="left:390.50px;top:567.60px;font-size:11px;line-height:15px;color:#f2f2f2;transform:scaleX(0.9971);">2</span>
<div style="left:407.2px;top:554.2px;width:21.9px;height:43.5px;box-sizing:border-box;border:1px solid #544d46;border-radius:3.5px;background:linear-gradient(#2f2f2f,#2a2a2a);"></div>
<div style="left:409.5px;top:558.1px;width:17.3px;height:1.6px;background:#b82c4a"></div>
<span style="left:415.10px;top:567.60px;font-size:11px;line-height:15px;color:#f2f2f2;transform:scaleX(0.9971);">3</span>
<div style="left:431.8px;top:554.2px;width:21.9px;height:43.5px;box-sizing:border-box;border:1px solid #544d46;border-radius:3.5px;background:linear-gradient(#2f2f2f,#2a2a2a);"></div>
<div style="left:434.1px;top:558.1px;width:17.3px;height:1.6px;background:#74a026"></div>
<span style="left:439.70px;top:567.60px;font-size:11px;line-height:15px;color:#f2f2f2;transform:scaleX(0.9971);">4</span>
<div style="left:456.4px;top:554.2px;width:21.9px;height:43.5px;box-sizing:border-box;border:1px solid #544d46;border-radius:3.5px;background:linear-gradient(#2f2f2f,#2a2a2a);"></div>
<div style="left:458.7px;top:558.1px;width:17.3px;height:1.6px;background:#d07c1e"></div>
<span style="left:464.30px;top:567.60px;font-size:11px;line-height:15px;color:#f2f2f2;transform:scaleX(0.9971);">5</span>
<div style="left:481.0px;top:554.2px;width:21.9px;height:43.5px;box-sizing:border-box;border:1px solid #544d46;border-radius:3.5px;background:linear-gradient(#2f2f2f,#2a2a2a);"></div>
<div style="left:483.3px;top:558.1px;width:17.3px;height:1.6px;background:#2020a8"></div>
<span style="left:488.90px;top:567.60px;font-size:11px;line-height:15px;color:#f2f2f2;transform:scaleX(0.9971);">6</span>
<div style="left:505.6px;top:554.2px;width:21.9px;height:43.5px;box-sizing:border-box;border:1px solid #544d46;border-radius:3.5px;background:linear-gradient(#2f2f2f,#2a2a2a);"></div>
<div style="left:507.9px;top:558.1px;width:17.3px;height:1.6px;background:#b23892"></div>
<span style="left:513.50px;top:567.60px;font-size:11px;line-height:15px;color:#f2f2f2;transform:scaleX(0.9971);">7</span>
<div style="left:530.2px;top:554.2px;width:21.9px;height:43.5px;box-sizing:border-box;border:1px solid #544d46;border-radius:3.5px;background:linear-gradient(#2f2f2f,#2a2a2a);"></div>
<div style="left:532.5px;top:558.1px;width:17.3px;height:1.6px;background:#10a278"></div>
<span style="left:538.10px;top:567.60px;font-size:11px;line-height:15px;color:#f2f2f2;transform:scaleX(0.9971);">8</span>
<div style="left:558.10px;top:554.00px;width:0.90px;height:43.60px;background:#3e3e3e;"></div>
<div style="left:563.9px;top:554.2px;width:21.8px;height:43.5px;box-sizing:border-box;border:1px solid #544d46;border-radius:3.5px;background:linear-gradient(#2f2f2f,#2a2a2a);"></div>
<div style="left:566.2px;top:558.1px;width:17.2px;height:1.6px;background:#c87c20"></div>
<span style="left:566.80px;top:562.00px;font-size:8.6px;line-height:12px;color:#f0f0f0;transform:scaleX(1.0456);">Add</span>
<span style="left:566.60px;top:571.00px;font-size:8.6px;line-height:12px;color:#f0f0f0;transform:scaleX(0.9532);">New</span>
<span style="left:564.65px;top:580.00px;font-size:8.6px;line-height:12px;color:#f0f0f0;transform:scaleX(1.0617);">Math</span>
<div style="left:588.9px;top:554.2px;width:21.5px;height:43.5px;box-sizing:border-box;border:1px solid #544d46;border-radius:3.5px;background:linear-gradient(#2f2f2f,#2a2a2a);"></div>
<div style="left:591.2px;top:558.1px;width:16.9px;height:1.6px;background:#9a9aa6"></div>
<span style="left:591.65px;top:562.00px;font-size:8.6px;line-height:12px;color:#f0f0f0;transform:scaleX(1.0456);">Add</span>
<span style="left:591.45px;top:571.00px;font-size:8.6px;line-height:12px;color:#f0f0f0;transform:scaleX(0.9532);">New</span>
<span style="left:593.05px;top:580.00px;font-size:8.6px;line-height:12px;color:#f0f0f0;transform:scaleX(0.9863);">Ref</span>
<div style="left:613.6px;top:554.2px;width:21.7px;height:43.5px;box-sizing:border-box;border:1px solid #544d46;border-radius:3.5px;background:linear-gradient(#2f2f2f,#2a2a2a);"></div>
<div style="left:615.9px;top:558.1px;width:17.1px;height:1.6px;background:#b050d8"></div>
<span style="left:616.45px;top:562.00px;font-size:8.6px;line-height:12px;color:#f0f0f0;transform:scaleX(1.0456);">Add</span>
<span style="left:616.25px;top:571.00px;font-size:8.6px;line-height:12px;color:#f0f0f0;transform:scaleX(0.9532);">New</span>
<span style="left:617.45px;top:580.00px;font-size:8.6px;line-height:12px;color:#f0f0f0;transform:scaleX(0.9447);">Bus</span>
<div style="left:641.00px;top:554.00px;width:0.90px;height:43.60px;background:#3e3e3e;"></div>
<div style="left:646.8px;top:554.2px;width:22.2px;height:43.5px;box-sizing:border-box;border:1px solid #544d46;border-radius:3.5px;background:linear-gradient(#2f2f2f,#2a2a2a);"></div>
<div style="left:649.1px;top:558.1px;width:17.6px;height:1.6px;background:#444"></div>
<div style="left:674.4px;top:554.2px;width:21.9px;height:43.5px;box-sizing:border-box;border:1px solid #544d46;border-radius:3.5px;background:linear-gradient(#2f2f2f,#2a2a2a);"></div>
<div style="left:676.7px;top:558.1px;width:17.3px;height:1.6px;background:#444"></div>
<span style="left:648.60px;top:571.10px;font-size:8.6px;line-height:12px;color:#f0f0f0;transform:scaleX(0.9837);">DVM</span>
<span style="left:677.40px;top:571.10px;font-size:8.6px;line-height:12px;color:#f0f0f0;transform:scaleX(0.9050);">AFG</span>
<div style="left:701.20px;top:554.00px;width:0.90px;height:43.60px;background:#3e3e3e;"></div>
<div style="left:708.00px;top:554.20px;width:110.90px;height:43.80px;background:#c8c8c8;border-radius:2.5px;"></div>
<div style="left:708.00px;top:554.20px;width:110.90px;height:9.80px;background:#565656;border-radius:2.5px 2.5px 0 0;"></div>
<span style="left:710.70px;top:552.80px;font-size:9px;line-height:13px;color:#f4f4f4;transform:scaleX(0.9897);">Horizontal</span>
<div style="left:824.20px;top:554.20px;width:88.00px;height:43.80px;background:#c8c8c8;border-radius:2.5px;"></div>
<div style="left:824.20px;top:554.20px;width:88.00px;height:9.80px;background:#565656;border-radius:2.5px 2.5px 0 0;"></div>
<span style="left:826.90px;top:552.80px;font-size:9px;line-height:13px;color:#f4f4f4;transform:scaleX(0.9512);">Trigger</span>
<div style="left:917.50px;top:554.20px;width:82.40px;height:43.80px;background:#c8c8c8;border-radius:2.5px;"></div>
<div style="left:917.50px;top:554.20px;width:82.40px;height:9.80px;background:#565656;border-radius:2.5px 2.5px 0 0;"></div>
<span style="left:920.20px;top:552.80px;font-size:9px;line-height:13px;color:#f4f4f4;transform:scaleX(0.9902);">Acquisition</span>
<span style="left:711.60px;top:565.50px;font-size:8.4px;line-height:12px;color:#0c0c0c;transform:scaleX(0.9976);-webkit-text-stroke:0.2px #0c0c0c;">2 ms/div</span>
<span style="left:769.90px;top:565.50px;font-size:8.4px;line-height:12px;color:#0c0c0c;transform:scaleX(0.9355);-webkit-text-stroke:0.2px #0c0c0c;">20 ms</span>
<span style="left:711.60px;top:576.00px;font-size:8.4px;line-height:12px;color:#0c0c0c;transform:scaleX(0.8859);-webkit-text-stroke:0.2px #0c0c0c;">SR: 3.125 GS/s</span>
<span style="left:769.90px;top:576.00px;font-size:8.4px;line-height:12px;color:#0c0c0c;transform:scaleX(0.9838);-webkit-text-stroke:0.2px #0c0c0c;">320 ps/pt</span>
<span style="left:711.60px;top:586.40px;font-size:8.4px;line-height:12px;color:#0c0c0c;transform:scaleX(0.9715);-webkit-text-stroke:0.2px #0c0c0c;">RL: 62.5 Mpts</span>
<span style="left:777.90px;top:586.40px;font-size:8.4px;line-height:12px;color:#0c0c0c;transform:scaleX(0.9517);-webkit-text-stroke:0.2px #0c0c0c;">50%</span>
<svg style="left:769px;top:588px;width:7px;height:9px" viewBox="769 588 7 9"><path d="M770 589.4H774V593.4L772 595.6L770 593.4Z" fill="#3a2a10" stroke="#e08a20" stroke-width="0.7"/></svg>
<div style="left:828.20px;top:567.00px;width:16.60px;height:9.60px;background:#fbf22e;border-radius:3.5px;border:1px solid #16161e;box-sizing:border-box;"></div>
<span style="left:834.70px;top:565.80px;font-size:8px;line-height:12px;color:#0c0c0c;transform:scaleX(0.8091);-webkit-text-stroke:0.2px #0c0c0c;">1</span>
<svg style="left:849px;top:566px;width:12px;height:12px" viewBox="849 566 12 12"><path d="M850.4 574.3H852.8L855.8 569.7H858.5" fill="none" stroke="#3a3a6a" stroke-width="0.8"/></svg>
<span style="left:864.90px;top:565.50px;font-size:8.4px;line-height:12px;color:#0c0c0c;transform:scaleX(0.9200);-webkit-text-stroke:0.2px #0c0c0c;">1 V</span>
<span style="left:922.00px;top:565.50px;font-size:8.4px;line-height:12px;color:#0c0c0c;transform:scaleX(0.9537);-webkit-text-stroke:0.2px #0c0c0c;">Manual,</span>
<span style="left:964.20px;top:565.50px;font-size:8.4px;line-height:12px;color:#0c0c0c;transform:scaleX(1.0038);-webkit-text-stroke:0.2px #0c0c0c;">Analyze</span>
<span style="left:922.00px;top:576.00px;font-size:8.4px;line-height:12px;color:#0c0c0c;transform:scaleX(0.9813);-webkit-text-stroke:0.2px #0c0c0c;">Peak Detect</span>
<span style="left:922.00px;top:586.40px;font-size:8.4px;line-height:12px;color:#0c0c0c;transform:scaleX(0.9422);-webkit-text-stroke:0.2px #0c0c0c;">Single: 1/1</span>
<div style="left:1005.60px;top:554.80px;width:49.00px;height:18.70px;background:#ff1f28;border-radius:3px;"></div>
<span style="left:1015.90px;top:557.50px;font-size:8px;line-height:12px;color:#fff;font-weight:bold;transform:scaleX(0.8657);">Stopped</span>
</div></body></html>
